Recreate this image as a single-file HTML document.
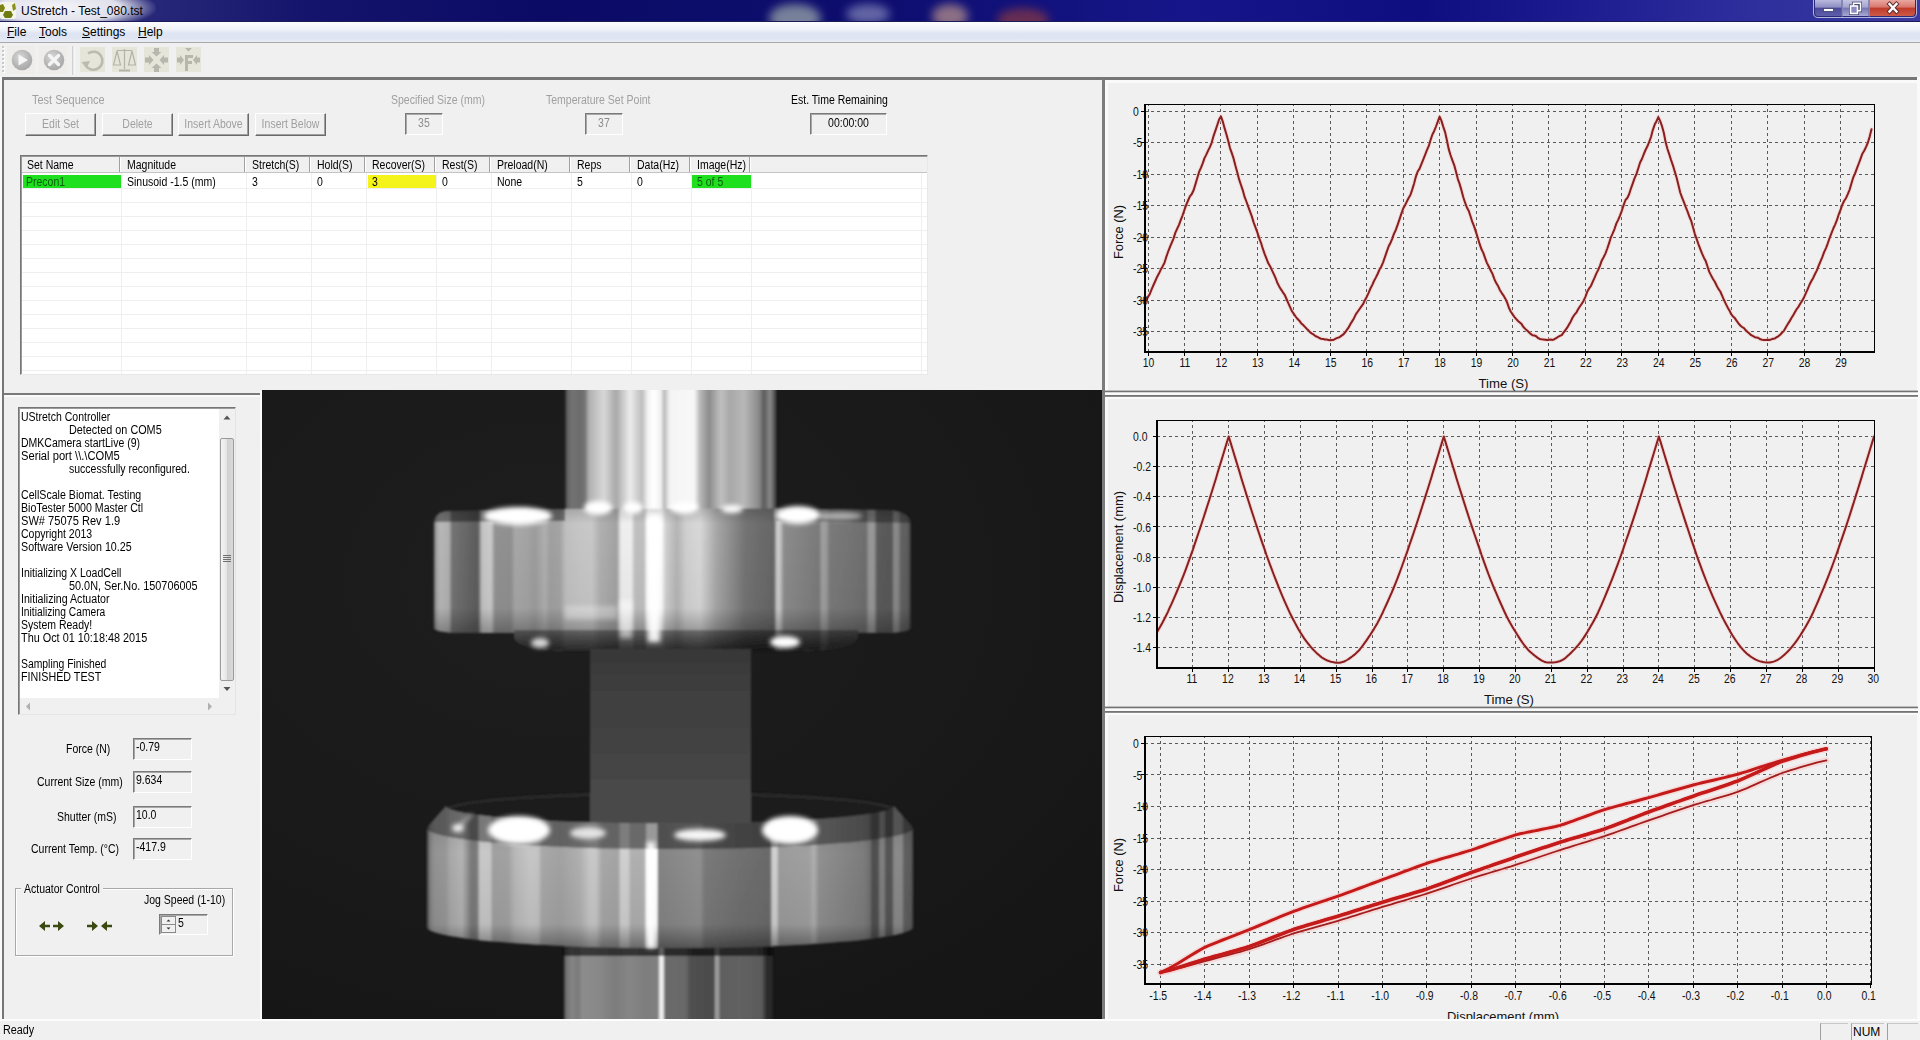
<!DOCTYPE html>
<html lang="en">
<head>
<meta charset="utf-8">
<title>UStretch - Test_080.tst</title>
<style>
html,body{margin:0;padding:0;}
body{width:1920px;height:1040px;overflow:hidden;position:relative;background:#f0f0f0;
 font-family:"Liberation Sans",sans-serif;font-size:12px;color:#000;}
.a{position:absolute;}
.t{position:absolute;white-space:nowrap;font-size:12px;line-height:14px;transform-origin:0 0;transform:scaleX(.875);}
.dis{color:#a0a0a0;}
#titlebar{left:0;top:0;width:1920px;height:21px;overflow:hidden;
 background:linear-gradient(90deg,#3b3b86 0,#14146c 16%,#0b0b66 28%,#0d0d6e 45%,#16168a 62%,#0e0e80 74%,#1c1c90 82%,#2c2c9c 90%,#3a3aa0 100%);}
#menubar{left:0;top:22px;width:1920px;height:20px;
 background:linear-gradient(180deg,#fbfcfe 0,#f1f4fa 35%,#dfe5f3 55%,#dde3f1 75%,#e8ecf6 100%);}
#menubar span{position:absolute;top:3px;font-size:12px;line-height:14px;white-space:nowrap;}
#menubar u{text-decoration:underline;}
#toolbar{left:0;top:43px;width:1920px;height:34px;background:#f0f0f0;}
.btn{position:absolute;box-sizing:border-box;height:23px;top:113px;background:#f0f0f0;
 border:1px solid;border-color:#fff #6a6a6a #6a6a6a #fff;box-shadow:inset -1px -1px 0 #a0a0a0;}
.btn .t{top:3px;}
.sunk{position:absolute;box-sizing:border-box;background:#f0f0f0;border:1px solid;border-color:#7a7a7a #fff #fff #7a7a7a;box-shadow:inset 1px 1px 0 #a8a8a8;}
.hline{position:absolute;background:#767676;}
</style>
</head>
<body>

<!-- ===== title bar ===== -->
<div id="titlebar" class="a">
 <div class="a" style="left:-40px;top:-14px;width:196px;height:44px;border-radius:22px;background:radial-gradient(ellipse at center,rgba(255,255,255,.95) 0,rgba(255,255,255,.85) 45%,rgba(255,255,255,0) 72%);"></div>
 <div class="a" style="left:769px;top:4px;width:52px;height:28px;border-radius:50%;background:#cfe0c0;opacity:0.55;filter:blur(5px);"></div>
<div class="a" style="left:846px;top:4px;width:44px;height:20px;border-radius:50%;background:#b8bcdc;opacity:0.5;filter:blur(5px);"></div>
<div class="a" style="left:932px;top:4px;width:36px;height:24px;border-radius:50%;background:#e0b090;opacity:0.6;filter:blur(5px);"></div>
<div class="a" style="left:997px;top:8px;width:52px;height:24px;border-radius:50%;background:#a04038;opacity:0.6;filter:blur(5px);"></div>

 <svg class="a" style="left:0;top:2px" width="17" height="18" viewBox="0 0 17 18">
  <rect x="0" y="0" width="16" height="17" rx="2" fill="#f4f4ea"/>
  <path d="M0 3 L3 2 L5 6 L3 10 L0 10 Z" fill="#7d8414"/>
  <path d="M5 9 L11 9 L13 13 L11 16 L5 16 L3 13 Z" fill="#6f7a10"/>
  <path d="M12 3 L15 1 L16 7 L13 9 Z" fill="#8a8f1e"/>
 </svg>
 <div class="a" style="left:21px;top:4px;font-size:12px;line-height:15px;white-space:nowrap;color:#000;">UStretch - Test_080.tst</div>
 <svg class="a" style="left:1806px;top:0" width="114" height="22" viewBox="1806 0 114 22">
<defs>
<linearGradient id="wb1" x1="0" y1="0" x2="0" y2="1"><stop offset="0" stop-color="#b9b9de"/><stop offset=".45" stop-color="#8e8ec4"/><stop offset=".5" stop-color="#4a4a98"/><stop offset="1" stop-color="#5e5eaa"/></linearGradient>
<linearGradient id="wb2" x1="0" y1="0" x2="0" y2="1"><stop offset="0" stop-color="#c4c4e2"/><stop offset=".45" stop-color="#a4a4d0"/><stop offset=".5" stop-color="#7676b4"/><stop offset="1" stop-color="#a8a8d2"/></linearGradient>
<linearGradient id="wb3" x1="0" y1="0" x2="0" y2="1"><stop offset="0" stop-color="#e9a8a0"/><stop offset=".45" stop-color="#d8766c"/><stop offset=".5" stop-color="#bf3a2a"/><stop offset="1" stop-color="#cf5a48"/></linearGradient>
</defs>
<path d="M1813.500 0 V13 Q1813.500 17.500 1818 17.500 H1912 Q1916.500 17.500 1916.500 13 V0 Z" fill="#2a2a7a"/>
<path d="M1815 0 V12.500 Q1815 16 1818.500 16 H1841.500 V0 Z" fill="url(#wb1)"/>
<path d="M1843 0 H1868.500 V16 H1843 Z" fill="url(#wb2)"/>
<path d="M1870 0 V16 H1911.500 Q1915 16 1915 12.500 V0 Z" fill="url(#wb3)"/>
<path d="M1813.500 0 V13 Q1813.500 17.500 1818 17.500 H1912 Q1916.500 17.500 1916.500 13 V0" fill="none" stroke="#d8d8f0" stroke-width="1" opacity=".8"/>
<path d="M1842.200 0 V16.500 M1869.200 0 V16.500" stroke="#e4e4f4" stroke-width="1" opacity=".7"/>
<rect x="1823.500" y="8.500" width="10" height="3" fill="#fff" stroke="#3c3c6c" stroke-width=".8"/>
<g fill="none" stroke="#fff" stroke-width="1.600"><rect x="1853.500" y="3.200" width="7" height="7.500" stroke="#3c3c6c" stroke-width="3"/><rect x="1850.500" y="6" width="7" height="7.500" stroke="#3c3c6c" stroke-width="3"/><rect x="1853.500" y="3.200" width="7" height="7.500"/><rect x="1850.500" y="6" width="7" height="7.500" fill="#8c8cc0"/></g>
<path d="M1889.500 4 L1896.500 11.500 M1896.500 4 L1889.500 11.500" stroke="#5a2a2a" stroke-width="4.200" stroke-linecap="square"/>
<path d="M1889.500 4 L1896.500 11.500 M1896.500 4 L1889.500 11.500" stroke="#fff" stroke-width="2.400" stroke-linecap="square"/>
</svg>

</div>
<div class="a" style="left:0;top:21px;width:1920px;height:1px;background:#1b1b58;"></div>

<!-- ===== menu bar ===== -->
<div id="menubar" class="a">
 <span style="left:7px"><u>F</u>ile</span>
 <span style="left:39px"><u>T</u>ools</span>
 <span style="left:82px"><u>S</u>ettings</span>
 <span style="left:138px"><u>H</u>elp</span>
</div>
<div class="a" style="left:0;top:42px;width:1920px;height:1px;background:#a9a9a9;"></div>

<!-- ===== toolbar ===== -->
<div id="toolbar" class="a">
<div class="a" style="left:2px;top:3px;width:2px;height:2px;background:#c8c8c8;box-shadow:1px 1px 0 #fff;"></div>
<div class="a" style="left:2px;top:7px;width:2px;height:2px;background:#c8c8c8;box-shadow:1px 1px 0 #fff;"></div>
<div class="a" style="left:2px;top:11px;width:2px;height:2px;background:#c8c8c8;box-shadow:1px 1px 0 #fff;"></div>
<div class="a" style="left:2px;top:15px;width:2px;height:2px;background:#c8c8c8;box-shadow:1px 1px 0 #fff;"></div>
<div class="a" style="left:2px;top:19px;width:2px;height:2px;background:#c8c8c8;box-shadow:1px 1px 0 #fff;"></div>
<div class="a" style="left:2px;top:23px;width:2px;height:2px;background:#c8c8c8;box-shadow:1px 1px 0 #fff;"></div>
<div class="a" style="left:2px;top:27px;width:2px;height:2px;background:#c8c8c8;box-shadow:1px 1px 0 #fff;"></div>
<svg class="a" style="left:0;top:0" width="220" height="34" viewBox="0 43 220 34">
<defs>
<radialGradient id="tbg" cx=".4" cy=".35" r=".75"><stop offset="0" stop-color="#d8d8d8"/><stop offset=".6" stop-color="#b4b4b4"/><stop offset="1" stop-color="#a4a4a4"/></radialGradient>
<filter id="tbb" x="-10%" y="-10%" width="120%" height="120%"><feGaussianBlur stdDeviation=".5"/></filter>
</defs>
<g filter="url(#tbb)">
<rect x="7" y="46" width="28" height="28" fill="#eeedea"/>
<rect x="39" y="46" width="28" height="28" fill="#eeedea"/>
<circle cx="22" cy="60" r="10.3" fill="url(#tbg)"/>
<path d="M18.5 54.5 L18.5 65.5 L28 60 Z" fill="#f6f6f6"/>
<circle cx="54" cy="60" r="10.3" fill="url(#tbg)"/>
<path d="M49.5 55.5 L58.5 64.5 M58.5 55.5 L49.5 64.5" stroke="#f4f4f4" stroke-width="3.4" stroke-linecap="round"/>
<rect x="80" y="47" width="25" height="25" fill="#e6e5da"/>
<rect x="112" y="47" width="25" height="25" fill="#e6e5da"/>
<rect x="144" y="47" width="25" height="25" fill="#e6e5da"/>
<rect x="176" y="47" width="25" height="25" fill="#e6e5da"/>
<path d="M85.5 65 A9 9 0 1 0 88 53.5" fill="none" stroke="#bcbbb2" stroke-width="2.6"/>
<path d="M81.5 62 L90 61 L86.5 68.5 Z" fill="#bcbbb2"/>
<g stroke="#b4b3aa" stroke-width="1.2" fill="none">
<path d="M117 50.5 H132 M124.5 49 V69"/>
<path d="M117 51 L113.5 65 H120.5 Z M132 51 L128.500 65 H135.5 Z"/>
<path d="M119 70.500 H130" stroke-width="2"/>
</g>
<g fill="#b8b7ae">
<path d="M154 48 h5 v4 h2.500 l-5 4.5 l-5 -4.5 h2.500 Z"/>
<path d="M154 72 h5 v-4 h2.500 l-5 -4.5 l-5 4.5 h2.500 Z"/>
<path d="M145 57.500 v5 h4 v2.500 l4.5 -5 l-4.5 -5 v2.500 Z"/>
<path d="M168 57.500 v5 h-4 v2.500 l-4.5 -5 l4.5 -5 v2.500 Z"/>
<path d="M185 48 h7 l-3.500 3.500 Z"/>
<path d="M185 55 h8 v3 h-5 v3 h4 v3 h-4 v7 h-3 Z"/>
<path d="M177 57.500 v5 h3 v2.500 l4 -5 l-4 -5 v2.500 Z"/>
<path d="M200 57.500 v5 h-3 v2.500 l-4 -5 l4 -5 v2.500 Z"/>
</g>
</g>
<rect x="72.500" y="46" width="1" height="29" fill="#b4b4b4"/><rect x="73.500" y="46" width="1" height="29" fill="#fdfdfd"/>
</svg>

</div>

<!-- ===== main frame lines ===== -->
<div class="hline" style="left:2px;top:77px;width:1915px;height:3px;"></div>
<div class="hline" style="left:2px;top:77px;width:2px;height:942px;"></div>
<div class="a" style="left:0;top:77px;width:2px;height:942px;background:#fafafa;"></div>
<div class="hline" style="left:1102px;top:79px;width:3px;height:940px;background:#7c7c7c;"></div>
<div class="a" style="left:1105px;top:80px;width:3px;height:939px;background:#fafafa;"></div>
<div class="a" style="left:1105px;top:80px;width:812px;height:3px;background:#fafafa;"></div>
<div class="a" style="left:1917px;top:77px;width:3px;height:942px;background:#fafafa;"></div>

<!-- ===== top-left: test sequence ===== -->
<div class="t dis" style="left:31.5px;top:93px;transform:scaleX(.915);">Test Sequence</div>
<div class="btn" style="left:25px;width:71px;"><div class="t dis" style="left:0;width:78.9px;text-align:center;">Edit Set</div></div>
<div class="btn" style="left:102px;width:71px;"><div class="t dis" style="left:0;width:78.9px;text-align:center;">Delete</div></div>
<div class="btn" style="left:178px;width:71px;"><div class="t dis" style="left:0;width:78.9px;text-align:center;">Insert Above</div></div>
<div class="btn" style="left:255px;width:71px;"><div class="t dis" style="left:0;width:78.9px;text-align:center;">Insert Below</div></div>
<div class="t dis" style="left:391px;top:93px;">Specified Size (mm)</div>
<div class="sunk" style="left:405px;top:113px;width:38px;height:22px;"><div class="t" style="left:0;top:2px;width:41px;text-align:center;color:#8c8c8c;">35</div></div>
<div class="t dis" style="left:546px;top:93px;">Temperature Set Point</div>
<div class="sunk" style="left:585px;top:113px;width:38px;height:22px;"><div class="t" style="left:0;top:2px;width:41px;text-align:center;color:#8c8c8c;">37</div></div>
<div class="t" style="left:791px;top:93px;">Est. Time Remaining</div>
<div class="sunk" style="left:810px;top:113px;width:77px;height:22px;"><div class="t" style="left:0;top:2px;width:85.7px;text-align:center;">00:00:00</div></div>
<div class="a" style="left:20px;top:155px;width:908px;height:220px;background:#fff;box-sizing:border-box;border:1px solid;border-color:#767676 #e8e8e8 #e8e8e8 #767676;box-shadow:inset 1px 1px 0 #9a9a9a;"></div>
<div class="a" style="left:22px;top:157px;width:905px;height:15px;background:#f0f0f0;border-bottom:1px solid #c4c4c4;"></div>
<div class="a" style="left:119px;top:157px;width:1px;height:15px;background:#a0a0a0;"></div><div class="a" style="left:120px;top:157px;width:1px;height:15px;background:#fff;"></div>
<div class="t" style="left:27px;top:158px;">Set Name</div>
<div class="a" style="left:244px;top:157px;width:1px;height:15px;background:#a0a0a0;"></div><div class="a" style="left:245px;top:157px;width:1px;height:15px;background:#fff;"></div>
<div class="t" style="left:127px;top:158px;">Magnitude</div>
<div class="a" style="left:309px;top:157px;width:1px;height:15px;background:#a0a0a0;"></div><div class="a" style="left:310px;top:157px;width:1px;height:15px;background:#fff;"></div>
<div class="t" style="left:252px;top:158px;">Stretch(S)</div>
<div class="a" style="left:364px;top:157px;width:1px;height:15px;background:#a0a0a0;"></div><div class="a" style="left:365px;top:157px;width:1px;height:15px;background:#fff;"></div>
<div class="t" style="left:317px;top:158px;">Hold(S)</div>
<div class="a" style="left:434px;top:157px;width:1px;height:15px;background:#a0a0a0;"></div><div class="a" style="left:435px;top:157px;width:1px;height:15px;background:#fff;"></div>
<div class="t" style="left:372px;top:158px;">Recover(S)</div>
<div class="a" style="left:489px;top:157px;width:1px;height:15px;background:#a0a0a0;"></div><div class="a" style="left:490px;top:157px;width:1px;height:15px;background:#fff;"></div>
<div class="t" style="left:442px;top:158px;">Rest(S)</div>
<div class="a" style="left:569px;top:157px;width:1px;height:15px;background:#a0a0a0;"></div><div class="a" style="left:570px;top:157px;width:1px;height:15px;background:#fff;"></div>
<div class="t" style="left:497px;top:158px;">Preload(N)</div>
<div class="a" style="left:629px;top:157px;width:1px;height:15px;background:#a0a0a0;"></div><div class="a" style="left:630px;top:157px;width:1px;height:15px;background:#fff;"></div>
<div class="t" style="left:577px;top:158px;">Reps</div>
<div class="a" style="left:689px;top:157px;width:1px;height:15px;background:#a0a0a0;"></div><div class="a" style="left:690px;top:157px;width:1px;height:15px;background:#fff;"></div>
<div class="t" style="left:637px;top:158px;">Data(Hz)</div>
<div class="a" style="left:749px;top:157px;width:1px;height:15px;background:#a0a0a0;"></div><div class="a" style="left:750px;top:157px;width:1px;height:15px;background:#fff;"></div>
<div class="t" style="left:697px;top:158px;">Image(Hz)</div>
<div class="a" style="left:22px;top:188px;width:905px;height:1px;background:#efefef;"></div>
<div class="a" style="left:22px;top:202px;width:905px;height:1px;background:#efefef;"></div>
<div class="a" style="left:22px;top:216px;width:905px;height:1px;background:#efefef;"></div>
<div class="a" style="left:22px;top:230px;width:905px;height:1px;background:#efefef;"></div>
<div class="a" style="left:22px;top:244px;width:905px;height:1px;background:#efefef;"></div>
<div class="a" style="left:22px;top:258px;width:905px;height:1px;background:#efefef;"></div>
<div class="a" style="left:22px;top:272px;width:905px;height:1px;background:#efefef;"></div>
<div class="a" style="left:22px;top:286px;width:905px;height:1px;background:#efefef;"></div>
<div class="a" style="left:22px;top:300px;width:905px;height:1px;background:#efefef;"></div>
<div class="a" style="left:22px;top:314px;width:905px;height:1px;background:#efefef;"></div>
<div class="a" style="left:22px;top:328px;width:905px;height:1px;background:#efefef;"></div>
<div class="a" style="left:22px;top:342px;width:905px;height:1px;background:#efefef;"></div>
<div class="a" style="left:22px;top:356px;width:905px;height:1px;background:#efefef;"></div>
<div class="a" style="left:22px;top:370px;width:905px;height:1px;background:#efefef;"></div>
<div class="a" style="left:121px;top:173px;width:1px;height:201px;background:#efefef;"></div>
<div class="a" style="left:246px;top:173px;width:1px;height:201px;background:#efefef;"></div>
<div class="a" style="left:311px;top:173px;width:1px;height:201px;background:#efefef;"></div>
<div class="a" style="left:366px;top:173px;width:1px;height:201px;background:#efefef;"></div>
<div class="a" style="left:436px;top:173px;width:1px;height:201px;background:#efefef;"></div>
<div class="a" style="left:491px;top:173px;width:1px;height:201px;background:#efefef;"></div>
<div class="a" style="left:571px;top:173px;width:1px;height:201px;background:#efefef;"></div>
<div class="a" style="left:631px;top:173px;width:1px;height:201px;background:#efefef;"></div>
<div class="a" style="left:691px;top:173px;width:1px;height:201px;background:#efefef;"></div>
<div class="a" style="left:751px;top:173px;width:1px;height:201px;background:#efefef;"></div>
<div class="a" style="left:23px;top:175px;width:98px;height:13px;background:#1fe01f;"></div>
<div class="a" style="left:368px;top:175px;width:68px;height:13px;background:#f4f41a;"></div>
<div class="a" style="left:692px;top:175px;width:59px;height:13px;background:#1fe01f;"></div>
<div class="t" style="left:26px;top:175px;color:#0b5e0b;">Precon1</div>
<div class="t" style="left:127px;top:175px;">Sinusoid -1.5 (mm)</div>
<div class="t" style="left:252px;top:175px;">3</div>
<div class="t" style="left:317px;top:175px;">0</div>
<div class="t" style="left:372px;top:175px;">3</div>
<div class="t" style="left:442px;top:175px;">0</div>
<div class="t" style="left:497px;top:175px;">None</div>
<div class="t" style="left:577px;top:175px;">5</div>
<div class="t" style="left:637px;top:175px;">0</div>
<div class="t" style="left:697px;top:175px;color:#0b5e0b;">5 of 5</div>
<div class="a" style="left:921px;top:173px;width:1px;height:201px;background:#efefef;"></div>


<!-- ===== bottom-left: log + readouts ===== -->
<div class="hline" style="left:4px;top:393px;width:256px;height:2px;background:#7a7a7a;"></div>
<div class="a" style="left:4px;top:395px;width:256px;height:2px;background:#fafafa;"></div>
<div class="a" style="left:18px;top:407px;width:218px;height:308px;background:#fff;box-sizing:border-box;border:1px solid;border-color:#767676 #e4e4e4 #e4e4e4 #767676;box-shadow:inset 1px 1px 0 #9a9a9a;"></div>
<div class="t" style="left:21px;top:410px;">UStretch Controller</div>
<div class="t" style="left:69px;top:423px;transform:scaleX(0.902);">Detected on COM5</div>
<div class="t" style="left:21px;top:436px;">DMKCamera startLive (9)</div>
<div class="t" style="left:21px;top:449px;transform:scaleX(0.931);">Serial port \\.\COM5</div>
<div class="t" style="left:69px;top:462px;">successfully reconfigured.</div>
<div class="t" style="left:21px;top:488px;transform:scaleX(0.885);">CellScale Biomat. Testing</div>
<div class="t" style="left:21px;top:501px;transform:scaleX(0.885);">BioTester 5000 Master Ctl</div>
<div class="t" style="left:21px;top:514px;transform:scaleX(0.923);">SW# 75075 Rev 1.9</div>
<div class="t" style="left:21px;top:527px;">Copyright 2013</div>
<div class="t" style="left:21px;top:540px;transform:scaleX(0.892);">Software Version 10.25</div>
<div class="t" style="left:21px;top:566px;">Initializing X LoadCell</div>
<div class="t" style="left:69px;top:579px;transform:scaleX(0.905);">50.0N, Ser.No. 150706005</div>
<div class="t" style="left:21px;top:592px;transform:scaleX(0.885);">Initializing Actuator</div>
<div class="t" style="left:21px;top:605px;transform:scaleX(0.854);">Initializing Camera</div>
<div class="t" style="left:21px;top:618px;">System Ready!</div>
<div class="t" style="left:21px;top:631px;transform:scaleX(0.905);">Thu Oct 01 10:18:48 2015</div>
<div class="t" style="left:21px;top:657px;transform:scaleX(0.865);">Sampling Finished</div>
<div class="t" style="left:21px;top:670px;transform:scaleX(0.894);">FINISHED TEST</div>
<div class="a" style="left:219px;top:409px;width:16px;height:289px;background:#f0f0f0;"></div>
<div class="a" style="left:220px;top:438px;width:14px;height:243px;box-sizing:border-box;border:1px solid #9a9a9a;border-radius:2px;background:linear-gradient(90deg,#f4f4f4 0,#e6e6e6 45%,#cfcfcf 55%,#dadada 100%);"></div>
<svg class="a" style="left:219px;top:409px" width="16" height="289" viewBox="0 0 16 289"><path d="M4.5 10.5 L8 6.5 L11.5 10.5 Z" fill="#555"/><path d="M4.5 278 L8 282 L11.5 278 Z" fill="#555"/><path d="M4 146.5h8M4 148.5h8M4 150.5h8M4 152.5h8" stroke="#707070" stroke-width="1"/></svg>
<div class="a" style="left:20px;top:698px;width:199px;height:16px;background:#f0f0f0;"></div>
<div class="a" style="left:219px;top:698px;width:16px;height:16px;background:#f0f0f0;"></div>
<svg class="a" style="left:20px;top:698px" width="199" height="16" viewBox="0 0 199 16"><path d="M10 4.5 L6 8.5 L10 12.5 Z" fill="#b0b0b0"/><path d="M188 4.5 L192 8.5 L188 12.5 Z" fill="#b0b0b0"/></svg>
<div class="t" style="left:66px;top:742px;">Force (N)</div>
<div class="sunk" style="left:133px;top:738px;width:59px;height:22px;"><div class="t" style="left:2px;top:1px;">-0.79</div></div>
<div class="t" style="left:37px;top:775px;">Current Size (mm)</div>
<div class="sunk" style="left:133px;top:771px;width:59px;height:22px;"><div class="t" style="left:2px;top:1px;">9.634</div></div>
<div class="t" style="left:57px;top:810px;">Shutter (mS)</div>
<div class="sunk" style="left:133px;top:806px;width:59px;height:22px;"><div class="t" style="left:2px;top:1px;">10.0</div></div>
<div class="t" style="left:31px;top:842px;">Current Temp. (°C)</div>
<div class="sunk" style="left:133px;top:838px;width:59px;height:22px;"><div class="t" style="left:2px;top:1px;">-417.9</div></div>
<div class="a" style="left:15px;top:888px;width:218px;height:68px;box-sizing:border-box;border:1px solid #a8a8a8;box-shadow:1px 1px 0 #fff, inset 1px 1px 0 #fff;"></div>
<div class="a" style="left:21px;top:882px;width:82px;height:14px;background:#f0f0f0;"></div>
<div class="t" style="left:24px;top:882px;">Actuator Control</div>
<div class="t" style="left:144px;top:893px;">Jog Speed (1-10)</div>
<div class="sunk" style="left:159px;top:914px;width:49px;height:21px;"></div>
<div class="a" style="left:161px;top:916px;width:15px;height:17px;box-sizing:border-box;border:1px solid #8a8a8a;background:#f0f0f0;"></div>
<div class="a" style="left:161px;top:924px;width:15px;height:1px;background:#8a8a8a;"></div>
<svg class="a" style="left:161px;top:916px" width="15" height="17" viewBox="0 0 15 17"><path d="M5.5 5.5 L7.5 3.5 L9.5 5.5 Z" fill="#333"/><path d="M5.5 11.5 L7.5 13.5 L9.5 11.5 Z" fill="#333"/></svg>
<div class="t" style="left:178px;top:916px;">5</div>
<svg class="a" style="left:36px;top:918px" width="80" height="16" viewBox="0 0 80 16">
<g fill="#3a4a10">
<path d="M3 8 L9 3 L9 6.7 L14 6.7 L14 9.3 L9 9.3 L9 13 Z"/>
<path d="M28 8 L22 3 L22 6.7 L17 6.7 L17 9.3 L22 9.3 L22 13 Z"/>
<path d="M62 8 L56 3 L56 6.7 L51 6.7 L51 9.3 L56 9.3 L56 13 Z"/>
<path d="M65 8 L71 3 L71 6.7 L76 6.7 L76 9.3 L71 9.3 L71 13 Z"/>
</g></svg>


<!-- ===== camera ===== -->
<svg class="a" style="left:262px;top:390px" width="840" height="629" viewBox="262 390 840 629">
<defs>
<linearGradient id="gST" gradientUnits="userSpaceOnUse" x1="565" y1="0" x2="776.5" y2="0"><stop offset="0.0000" stop-color="#343434"/><stop offset="0.0142" stop-color="#666666"/><stop offset="0.0331" stop-color="#727272"/><stop offset="0.0709" stop-color="#6c6c6c"/><stop offset="0.0946" stop-color="#747474"/><stop offset="0.1135" stop-color="#b0b0b0"/><stop offset="0.1844" stop-color="#d8d8d8"/><stop offset="0.2411" stop-color="#a8a8a8"/><stop offset="0.3073" stop-color="#ececec"/><stop offset="0.3641" stop-color="#bdbdbd"/><stop offset="0.3924" stop-color="#f4f4f4"/><stop offset="0.4208" stop-color="#ffffff"/><stop offset="0.4539" stop-color="#f0f0f0"/><stop offset="0.4681" stop-color="#b8b8b8"/><stop offset="0.4965" stop-color="#f4f4f4"/><stop offset="0.6099" stop-color="#f8f8f8"/><stop offset="0.6383" stop-color="#b8b8b8"/><stop offset="0.6809" stop-color="#8c8c8c"/><stop offset="0.7376" stop-color="#c0c0c0"/><stop offset="0.7801" stop-color="#a8a8a8"/><stop offset="0.8463" stop-color="#b8b8b8"/><stop offset="0.9173" stop-color="#8a8a8a"/><stop offset="0.9409" stop-color="#5a5a5a"/><stop offset="0.9693" stop-color="#8a8a8a"/><stop offset="1.0000" stop-color="#383838"/></linearGradient>
<linearGradient id="gDT" gradientUnits="userSpaceOnUse" x1="433" y1="0" x2="911" y2="0"><stop offset="0.0000" stop-color="#383838"/><stop offset="0.0063" stop-color="#a0a0a0"/><stop offset="0.0146" stop-color="#b8b8b8"/><stop offset="0.0335" stop-color="#b0b0b0"/><stop offset="0.0397" stop-color="#747474"/><stop offset="0.0669" stop-color="#686868"/><stop offset="0.0941" stop-color="#5c5c5c"/><stop offset="0.1025" stop-color="#c4c4c4"/><stop offset="0.1213" stop-color="#cccccc"/><stop offset="0.1297" stop-color="#929292"/><stop offset="0.1632" stop-color="#909090"/><stop offset="0.1715" stop-color="#a8a8a8"/><stop offset="0.1967" stop-color="#a4a4a4"/><stop offset="0.2134" stop-color="#9c9c9c"/><stop offset="0.2343" stop-color="#b0b0b0"/><stop offset="0.2448" stop-color="#a0a0a0"/><stop offset="0.2657" stop-color="#a4a4a4"/><stop offset="0.2782" stop-color="#c0c0c0"/><stop offset="0.3075" stop-color="#c6c6c6"/><stop offset="0.3326" stop-color="#c8c8c8"/><stop offset="0.3494" stop-color="#b0b0b0"/><stop offset="0.3849" stop-color="#a2a2a2"/><stop offset="0.3933" stop-color="#eeeeee"/><stop offset="0.4142" stop-color="#f0f0f0"/><stop offset="0.4226" stop-color="#c0c0c0"/><stop offset="0.4414" stop-color="#c0c0c0"/><stop offset="0.4498" stop-color="#ffffff"/><stop offset="0.4770" stop-color="#ffffff"/><stop offset="0.4874" stop-color="#d0d0d0"/><stop offset="0.5105" stop-color="#b4b4b4"/><stop offset="0.5293" stop-color="#d0d0d0"/><stop offset="0.5586" stop-color="#d8d8d8"/><stop offset="0.5753" stop-color="#c0c0c0"/><stop offset="0.5921" stop-color="#a8a8a8"/><stop offset="0.6276" stop-color="#8a8a8a"/><stop offset="0.6527" stop-color="#747474"/><stop offset="0.6841" stop-color="#6c6c6c"/><stop offset="0.7134" stop-color="#666666"/><stop offset="0.7197" stop-color="#d0d0d0"/><stop offset="0.7259" stop-color="#c8c8c8"/><stop offset="0.7343" stop-color="#8c8c8c"/><stop offset="0.7678" stop-color="#848484"/><stop offset="0.8075" stop-color="#7a7a7a"/><stop offset="0.8138" stop-color="#a0a0a0"/><stop offset="0.8222" stop-color="#9c9c9c"/><stop offset="0.8305" stop-color="#7a7a7a"/><stop offset="0.8724" stop-color="#747474"/><stop offset="0.9059" stop-color="#6e6e6e"/><stop offset="0.9121" stop-color="#989898"/><stop offset="0.9226" stop-color="#989898"/><stop offset="0.9289" stop-color="#5c5c5c"/><stop offset="0.9603" stop-color="#585858"/><stop offset="0.9644" stop-color="#8a8a8a"/><stop offset="0.9728" stop-color="#888888"/><stop offset="0.9791" stop-color="#626262"/><stop offset="0.9937" stop-color="#5c5c5c"/><stop offset="1.0000" stop-color="#343434"/></linearGradient>
<linearGradient id="gDB" gradientUnits="userSpaceOnUse" x1="426.5" y1="0" x2="913.5" y2="0"><stop offset="0.0000" stop-color="#383838"/><stop offset="0.0072" stop-color="#808080"/><stop offset="0.0154" stop-color="#929292"/><stop offset="0.0400" stop-color="#989898"/><stop offset="0.0483" stop-color="#a8a8a8"/><stop offset="0.0729" stop-color="#b4b4b4"/><stop offset="0.0852" stop-color="#909090"/><stop offset="0.0914" stop-color="#7a7a7a"/><stop offset="0.1037" stop-color="#7a7a7a"/><stop offset="0.1099" stop-color="#c8c8c8"/><stop offset="0.1304" stop-color="#c8c8c8"/><stop offset="0.1366" stop-color="#a0a0a0"/><stop offset="0.1674" stop-color="#a2a2a2"/><stop offset="0.1817" stop-color="#b8b8b8"/><stop offset="0.2125" stop-color="#c6c6c6"/><stop offset="0.2290" stop-color="#c4c4c4"/><stop offset="0.2372" stop-color="#a8a8a8"/><stop offset="0.2741" stop-color="#a2a2a2"/><stop offset="0.3152" stop-color="#b0b0b0"/><stop offset="0.3357" stop-color="#c8c8c8"/><stop offset="0.3480" stop-color="#c8c8c8"/><stop offset="0.3604" stop-color="#a8a8a8"/><stop offset="0.3932" stop-color="#a4a4a4"/><stop offset="0.3994" stop-color="#d0d0d0"/><stop offset="0.4138" stop-color="#d0d0d0"/><stop offset="0.4199" stop-color="#b0b0b0"/><stop offset="0.4487" stop-color="#b0b0b0"/><stop offset="0.4528" stop-color="#ffffff"/><stop offset="0.4723" stop-color="#ffffff"/><stop offset="0.4764" stop-color="#848484"/><stop offset="0.5205" stop-color="#8a8a8a"/><stop offset="0.5616" stop-color="#909090"/><stop offset="0.5719" stop-color="#7a7a7a"/><stop offset="0.6437" stop-color="#707070"/><stop offset="0.7053" stop-color="#6a6a6a"/><stop offset="0.7105" stop-color="#d0d0d0"/><stop offset="0.7187" stop-color="#d0d0d0"/><stop offset="0.7238" stop-color="#9c9c9c"/><stop offset="0.7854" stop-color="#a0a0a0"/><stop offset="0.7957" stop-color="#b0b0b0"/><stop offset="0.8060" stop-color="#909090"/><stop offset="0.8984" stop-color="#7c7c7c"/><stop offset="0.9107" stop-color="#707070"/><stop offset="0.9148" stop-color="#505050"/><stop offset="0.9271" stop-color="#505050"/><stop offset="0.9312" stop-color="#808080"/><stop offset="0.9394" stop-color="#808080"/><stop offset="0.9435" stop-color="#555555"/><stop offset="0.9559" stop-color="#555555"/><stop offset="0.9600" stop-color="#8a8a8a"/><stop offset="0.9764" stop-color="#8a8a8a"/><stop offset="0.9805" stop-color="#606060"/><stop offset="0.9949" stop-color="#5c5c5c"/><stop offset="1.0000" stop-color="#343434"/></linearGradient>
<linearGradient id="gSB" gradientUnits="userSpaceOnUse" x1="563.5" y1="0" x2="773" y2="0"><stop offset="0.0000" stop-color="#2a2a2a"/><stop offset="0.0119" stop-color="#707070"/><stop offset="0.0406" stop-color="#868686"/><stop offset="0.0692" stop-color="#787878"/><stop offset="0.0883" stop-color="#8c8c8c"/><stop offset="0.1742" stop-color="#888888"/><stop offset="0.2458" stop-color="#7c7c7c"/><stop offset="0.3174" stop-color="#868686"/><stop offset="0.3890" stop-color="#7e7e7e"/><stop offset="0.4511" stop-color="#808080"/><stop offset="0.4606" stop-color="#f0f0f0"/><stop offset="0.4749" stop-color="#f0f0f0"/><stop offset="0.4845" stop-color="#6c6c6c"/><stop offset="0.5847" stop-color="#686868"/><stop offset="0.6038" stop-color="#505050"/><stop offset="0.7184" stop-color="#4a4a4a"/><stop offset="0.7255" stop-color="#9a9a9a"/><stop offset="0.7399" stop-color="#9a9a9a"/><stop offset="0.7470" stop-color="#5e5e5e"/><stop offset="0.8425" stop-color="#626262"/><stop offset="0.9475" stop-color="#5a5a5a"/><stop offset="0.9666" stop-color="#2e2e2e"/><stop offset="1.0000" stop-color="#262626"/></linearGradient>
<linearGradient id="gV1" x1="0" y1="0" x2="0" y2="1"><stop offset="0" stop-color="#000" stop-opacity=".15"/><stop offset=".12" stop-color="#000" stop-opacity="0"/><stop offset=".8" stop-color="#000" stop-opacity=".04"/><stop offset="1" stop-color="#000" stop-opacity=".3"/></linearGradient>
<linearGradient id="gV2" x1="0" y1="0" x2="0" y2="1"><stop offset="0" stop-color="#000" stop-opacity=".06"/><stop offset=".2" stop-color="#000" stop-opacity="0"/><stop offset=".8" stop-color="#000" stop-opacity=".06"/><stop offset="1" stop-color="#000" stop-opacity=".4"/></linearGradient>
<linearGradient id="gStep" x1="0" y1="0" x2="0" y2="1"><stop offset="0" stop-color="#000" stop-opacity=".5"/><stop offset=".35" stop-color="#000" stop-opacity=".62"/><stop offset="1" stop-color="#000" stop-opacity=".8"/></linearGradient>
<linearGradient id="gSp" x1="0" y1="0" x2="0" y2="1"><stop offset="0" stop-color="#373737"/><stop offset=".25" stop-color="#3f3f3f"/><stop offset="1" stop-color="#494949"/></linearGradient>
<radialGradient id="gBG" cx=".35" cy=".3" r=".9"><stop offset="0" stop-color="#1e1e1e"/><stop offset=".6" stop-color="#191919"/><stop offset="1" stop-color="#151515"/></radialGradient>
<filter id="b1" x="-5%" y="-5%" width="110%" height="110%"><feGaussianBlur stdDeviation="1.1"/></filter>
<filter id="b3" x="-20%" y="-40%" width="140%" height="180%"><feGaussianBlur stdDeviation="2.4"/></filter>
<clipPath id="cc"><rect x="262" y="390" width="840" height="629"/></clipPath>
</defs>
<rect x="262" y="390" width="840" height="629" fill="url(#gBG)"/>
<g clip-path="url(#cc)"><g filter="url(#b1)">
<rect x="565" y="380" width="211.5" height="132" fill="url(#gST)"/>
<path d="M433.5 523 Q434.5 513 446 511 L565 509 L776 508.5 L890 510 Q909.5 512 911 523 L911 628 Q910 632 890 633 L455 633 Q435 632 433.5 628 Z" fill="url(#gDT)"/>
<path d="M433.5 523 Q434.5 513 446 511 L565 509 L776 508.5 L890 510 Q909.5 512 911 523 L911 628 Q910 632 890 633 L455 633 Q435 632 433.5 628 Z" fill="url(#gV1)"/>
<path d="M433.5 523 Q434.5 513 446 511 L565 509 L565 521 L433.5 522 Z" fill="#000" opacity=".38"/>
<path d="M776 508.5 L890 510 Q909.5 512 911 523 L776 521 Z" fill="#000" opacity=".3"/>
<path d="M514 630 L858 630 L858 638 Q852 649 800 651 L565 651 Q520 649 514 638 Z" fill="url(#gDT)"/>
<path d="M514 630 L858 630 L858 638 Q852 649 800 651 L565 651 Q520 649 514 638 Z" fill="url(#gStep)"/>
<rect x="590" y="649" width="161" height="175" fill="url(#gSp)"/>
<rect x="563.5" y="935" width="209.5" height="95" fill="url(#gSB)"/>
<rect x="563.5" y="935" width="209.5" height="21" fill="#000" opacity=".6"/>
<ellipse cx="670" cy="810" rx="226" ry="18" fill="#2c2c2c"/><ellipse cx="670" cy="811" rx="222" ry="16" fill="#1f1f1f"/>
<rect x="590" y="780" width="161" height="45" fill="#494949"/>
<path d="M426.5 828 L446 806 A224 17.6 0 0 0 894 806 L913.5 828 A243.5 21 0 0 1 426.5 828 Z" fill="url(#gDB)"/>
<path d="M426.5 828 L446 806 A224 17.6 0 0 0 894 806 L913.5 828 A243.5 21 0 0 1 426.5 828 Z" fill="#000" opacity=".4"/>
<path d="M426.5 828 A243.5 21 0 0 0 913.5 828 L913.5 927 A243.5 21 0 0 1 426.5 927 Z" fill="url(#gDB)"/>
<path d="M426.5 828 A243.5 21 0 0 0 913.5 828 L913.5 927 A243.5 21 0 0 1 426.5 927 Z" fill="url(#gV2)"/>
</g>
<g filter="url(#b3)" fill="#fff">
<ellipse cx="598" cy="508" rx="14" ry="7"/>
<ellipse cx="633" cy="508" rx="10" ry="6"/>
<ellipse cx="684" cy="508" rx="14" ry="6"/>
<ellipse cx="732" cy="509" rx="11" ry="4"/>
<ellipse cx="518" cy="516" rx="34" ry="9"/>
<ellipse cx="520" cy="514" rx="22" ry="7"/>
<ellipse cx="798" cy="515" rx="22" ry="9"/>
<ellipse cx="798" cy="514" rx="15" ry="6"/>
<ellipse cx="840" cy="516" rx="22" ry="4" opacity=".55"/>
<ellipse cx="654" cy="520" rx="7" ry="5"/>
<ellipse cx="540" cy="643" rx="9" ry="5" opacity=".8"/>
<ellipse cx="785" cy="642" rx="15" ry="6"/>
<ellipse cx="785" cy="642" rx="9" ry="4"/>
<ellipse cx="519" cy="830" rx="31" ry="14"/>
<ellipse cx="519" cy="831" rx="26" ry="10"/>
<ellipse cx="790" cy="830" rx="28" ry="14"/>
<ellipse cx="790" cy="831" rx="23" ry="10"/>
<ellipse cx="588" cy="833" rx="18" ry="6" opacity=".8"/>
<ellipse cx="700" cy="835" rx="26" ry="6" opacity=".95"/>
<ellipse cx="458" cy="828" rx="6" ry="4" opacity=".9"/>
<rect x="648" y="520" width="12" height="122" opacity=".9"/>
<rect x="620" y="600" width="12" height="38" opacity=".5"/>
<rect x="565" y="606" width="52" height="13" opacity=".3"/>
<path d="M456 829 L472 814" stroke="#fff" stroke-width="3" opacity=".5"/>
<rect x="647" y="842" width="8" height="106" opacity=".95"/>
</g>
</g>
</svg>


<!-- ===== charts ===== -->
<svg class="a" style="left:1105px;top:80px" width="815" height="939" viewBox="1105 80 815 939" shape-rendering="auto">
<rect x="1105" y="390.6" width="813" height="1.9" fill="#737373"/>
<rect x="1105" y="392.5" width="813" height="2.5" fill="#fafafa"/>
<rect x="1105" y="395" width="813" height="1.9" fill="#737373"/>
<rect x="1105" y="396.9" width="813" height="2" fill="#fafafa"/>
<rect x="1105" y="706.6" width="813" height="1.9" fill="#737373"/>
<rect x="1105" y="708.5" width="813" height="2.5" fill="#fafafa"/>
<rect x="1105" y="711" width="813" height="1.9" fill="#737373"/>
<rect x="1105" y="712.9" width="813" height="2" fill="#fafafa"/>
<line x1="1148.5" y1="105" x2="1148.5" y2="351" stroke="#5a5a5a" stroke-width="1" stroke-dasharray="3 3" stroke-dashoffset="2"/>
<line x1="1148.5" y1="352" x2="1148.5" y2="356" stroke="#000" stroke-width="1"/>
<line x1="1184.5" y1="105" x2="1184.5" y2="351" stroke="#5a5a5a" stroke-width="1" stroke-dasharray="3 3" stroke-dashoffset="2"/>
<line x1="1184.5" y1="352" x2="1184.5" y2="356" stroke="#000" stroke-width="1"/>
<line x1="1220.5" y1="105" x2="1220.5" y2="351" stroke="#5a5a5a" stroke-width="1" stroke-dasharray="3 3" stroke-dashoffset="2"/>
<line x1="1220.5" y1="352" x2="1220.5" y2="356" stroke="#000" stroke-width="1"/>
<line x1="1257.5" y1="105" x2="1257.5" y2="351" stroke="#5a5a5a" stroke-width="1" stroke-dasharray="3 3" stroke-dashoffset="2"/>
<line x1="1257.5" y1="352" x2="1257.5" y2="356" stroke="#000" stroke-width="1"/>
<line x1="1293.5" y1="105" x2="1293.5" y2="351" stroke="#5a5a5a" stroke-width="1" stroke-dasharray="3 3" stroke-dashoffset="2"/>
<line x1="1293.5" y1="352" x2="1293.5" y2="356" stroke="#000" stroke-width="1"/>
<line x1="1330.5" y1="105" x2="1330.5" y2="351" stroke="#5a5a5a" stroke-width="1" stroke-dasharray="3 3" stroke-dashoffset="2"/>
<line x1="1330.5" y1="352" x2="1330.5" y2="356" stroke="#000" stroke-width="1"/>
<line x1="1366.5" y1="105" x2="1366.5" y2="351" stroke="#5a5a5a" stroke-width="1" stroke-dasharray="3 3" stroke-dashoffset="2"/>
<line x1="1366.5" y1="352" x2="1366.5" y2="356" stroke="#000" stroke-width="1"/>
<line x1="1403.5" y1="105" x2="1403.5" y2="351" stroke="#5a5a5a" stroke-width="1" stroke-dasharray="3 3" stroke-dashoffset="2"/>
<line x1="1403.5" y1="352" x2="1403.5" y2="356" stroke="#000" stroke-width="1"/>
<line x1="1439.5" y1="105" x2="1439.5" y2="351" stroke="#5a5a5a" stroke-width="1" stroke-dasharray="3 3" stroke-dashoffset="2"/>
<line x1="1439.5" y1="352" x2="1439.5" y2="356" stroke="#000" stroke-width="1"/>
<line x1="1476.5" y1="105" x2="1476.5" y2="351" stroke="#5a5a5a" stroke-width="1" stroke-dasharray="3 3" stroke-dashoffset="2"/>
<line x1="1476.5" y1="352" x2="1476.5" y2="356" stroke="#000" stroke-width="1"/>
<line x1="1512.5" y1="105" x2="1512.5" y2="351" stroke="#5a5a5a" stroke-width="1" stroke-dasharray="3 3" stroke-dashoffset="2"/>
<line x1="1512.5" y1="352" x2="1512.5" y2="356" stroke="#000" stroke-width="1"/>
<line x1="1548.5" y1="105" x2="1548.5" y2="351" stroke="#5a5a5a" stroke-width="1" stroke-dasharray="3 3" stroke-dashoffset="2"/>
<line x1="1548.5" y1="352" x2="1548.5" y2="356" stroke="#000" stroke-width="1"/>
<line x1="1585.5" y1="105" x2="1585.5" y2="351" stroke="#5a5a5a" stroke-width="1" stroke-dasharray="3 3" stroke-dashoffset="2"/>
<line x1="1585.5" y1="352" x2="1585.5" y2="356" stroke="#000" stroke-width="1"/>
<line x1="1621.5" y1="105" x2="1621.5" y2="351" stroke="#5a5a5a" stroke-width="1" stroke-dasharray="3 3" stroke-dashoffset="2"/>
<line x1="1621.5" y1="352" x2="1621.5" y2="356" stroke="#000" stroke-width="1"/>
<line x1="1658.5" y1="105" x2="1658.5" y2="351" stroke="#5a5a5a" stroke-width="1" stroke-dasharray="3 3" stroke-dashoffset="2"/>
<line x1="1658.5" y1="352" x2="1658.5" y2="356" stroke="#000" stroke-width="1"/>
<line x1="1694.5" y1="105" x2="1694.5" y2="351" stroke="#5a5a5a" stroke-width="1" stroke-dasharray="3 3" stroke-dashoffset="2"/>
<line x1="1694.5" y1="352" x2="1694.5" y2="356" stroke="#000" stroke-width="1"/>
<line x1="1731.5" y1="105" x2="1731.5" y2="351" stroke="#5a5a5a" stroke-width="1" stroke-dasharray="3 3" stroke-dashoffset="2"/>
<line x1="1731.5" y1="352" x2="1731.5" y2="356" stroke="#000" stroke-width="1"/>
<line x1="1767.5" y1="105" x2="1767.5" y2="351" stroke="#5a5a5a" stroke-width="1" stroke-dasharray="3 3" stroke-dashoffset="2"/>
<line x1="1767.5" y1="352" x2="1767.5" y2="356" stroke="#000" stroke-width="1"/>
<line x1="1804.5" y1="105" x2="1804.5" y2="351" stroke="#5a5a5a" stroke-width="1" stroke-dasharray="3 3" stroke-dashoffset="2"/>
<line x1="1804.5" y1="352" x2="1804.5" y2="356" stroke="#000" stroke-width="1"/>
<line x1="1840.5" y1="105" x2="1840.5" y2="351" stroke="#5a5a5a" stroke-width="1" stroke-dasharray="3 3" stroke-dashoffset="2"/>
<line x1="1840.5" y1="352" x2="1840.5" y2="356" stroke="#000" stroke-width="1"/>
<line x1="1146" y1="111.5" x2="1874" y2="111.5" stroke="#5a5a5a" stroke-width="1" stroke-dasharray="3 3" stroke-dashoffset="1"/>
<line x1="1141" y1="111.5" x2="1145" y2="111.5" stroke="#000" stroke-width="1"/>
<line x1="1146" y1="142.5" x2="1874" y2="142.5" stroke="#5a5a5a" stroke-width="1" stroke-dasharray="3 3" stroke-dashoffset="1"/>
<line x1="1141" y1="142.5" x2="1145" y2="142.5" stroke="#000" stroke-width="1"/>
<line x1="1146" y1="174.5" x2="1874" y2="174.5" stroke="#5a5a5a" stroke-width="1" stroke-dasharray="3 3" stroke-dashoffset="1"/>
<line x1="1141" y1="174.5" x2="1145" y2="174.5" stroke="#000" stroke-width="1"/>
<line x1="1146" y1="205.5" x2="1874" y2="205.5" stroke="#5a5a5a" stroke-width="1" stroke-dasharray="3 3" stroke-dashoffset="1"/>
<line x1="1141" y1="205.5" x2="1145" y2="205.5" stroke="#000" stroke-width="1"/>
<line x1="1146" y1="237.5" x2="1874" y2="237.5" stroke="#5a5a5a" stroke-width="1" stroke-dasharray="3 3" stroke-dashoffset="1"/>
<line x1="1141" y1="237.5" x2="1145" y2="237.5" stroke="#000" stroke-width="1"/>
<line x1="1146" y1="268.5" x2="1874" y2="268.5" stroke="#5a5a5a" stroke-width="1" stroke-dasharray="3 3" stroke-dashoffset="1"/>
<line x1="1141" y1="268.5" x2="1145" y2="268.5" stroke="#000" stroke-width="1"/>
<line x1="1146" y1="300.5" x2="1874" y2="300.5" stroke="#5a5a5a" stroke-width="1" stroke-dasharray="3 3" stroke-dashoffset="1"/>
<line x1="1141" y1="300.5" x2="1145" y2="300.5" stroke="#000" stroke-width="1"/>
<line x1="1146" y1="331.5" x2="1874" y2="331.5" stroke="#5a5a5a" stroke-width="1" stroke-dasharray="3 3" stroke-dashoffset="1"/>
<line x1="1141" y1="331.5" x2="1145" y2="331.5" stroke="#000" stroke-width="1"/>
<clipPath id="c1"><rect x="1146" y="105" width="728" height="246"/></clipPath>
<path d="M1144.4 303.6 L1146.2 300.1 L1148.0 296.9 L1149.8 294.0 L1151.6 289.4 L1153.5 285.0 L1155.3 281.0 L1157.1 276.9 L1158.9 273.6 L1160.8 269.6 L1162.6 266.4 L1164.4 263.0 L1166.2 257.2 L1168.0 252.0 L1169.9 247.1 L1171.7 242.8 L1173.5 238.6 L1175.3 232.9 L1177.2 228.7 L1179.0 224.9 L1180.8 219.9 L1182.6 215.3 L1184.5 209.7 L1186.3 204.7 L1188.1 200.5 L1189.9 196.4 L1191.7 194.2 L1193.6 190.2 L1195.4 184.4 L1197.2 178.3 L1199.0 172.2 L1200.9 167.8 L1202.7 163.3 L1204.5 158.1 L1206.3 154.6 L1208.1 150.6 L1210.0 146.9 L1211.8 142.3 L1213.6 135.8 L1215.4 130.7 L1217.3 125.0 L1219.1 119.5 L1220.9 116.4 L1222.7 121.3 L1224.5 127.9 L1226.4 134.2 L1228.2 140.7 L1230.0 148.1 L1231.8 153.2 L1233.7 158.9 L1235.5 166.0 L1237.3 172.4 L1239.1 179.4 L1240.9 184.8 L1242.8 190.3 L1244.6 196.9 L1246.4 201.5 L1248.2 206.7 L1250.1 211.7 L1251.9 216.6 L1253.7 222.6 L1255.5 227.3 L1257.4 232.6 L1259.2 238.1 L1261.0 242.8 L1262.8 248.7 L1264.6 253.8 L1266.5 258.7 L1268.3 263.3 L1270.1 266.3 L1271.9 270.1 L1273.8 274.1 L1275.6 278.2 L1277.4 283.0 L1279.2 286.4 L1281.0 289.4 L1282.9 292.3 L1284.7 294.8 L1286.5 299.0 L1288.3 303.2 L1290.2 307.3 L1292.0 311.3 L1293.8 313.9 L1295.6 316.5 L1297.4 318.8 L1299.3 320.7 L1301.1 323.2 L1302.9 324.8 L1304.7 326.6 L1306.6 328.7 L1308.4 330.3 L1310.2 332.4 L1312.0 333.6 L1313.8 334.7 L1315.7 336.2 L1317.5 336.9 L1319.3 338.0 L1321.1 338.7 L1323.0 338.9 L1324.8 339.5 L1326.6 339.5 L1328.4 339.9 L1330.3 340.3 L1332.1 340.0 L1333.9 339.7 L1335.7 338.7 L1337.5 337.9 L1339.4 337.3 L1341.2 335.9 L1343.0 334.7 L1344.8 332.8 L1346.7 330.2 L1348.5 327.7 L1350.3 324.3 L1352.1 321.4 L1353.9 318.4 L1355.8 314.4 L1357.6 311.8 L1359.4 309.2 L1361.2 306.7 L1363.1 304.1 L1364.9 300.2 L1366.7 296.9 L1368.5 293.1 L1370.3 288.8 L1372.2 285.1 L1374.0 281.0 L1375.8 277.6 L1377.6 274.0 L1379.5 269.6 L1381.3 266.5 L1383.1 262.3 L1384.9 257.1 L1386.7 251.9 L1388.6 246.5 L1390.4 243.0 L1392.2 238.8 L1394.0 233.7 L1395.9 229.7 L1397.7 224.6 L1399.5 219.4 L1401.3 213.9 L1403.2 208.5 L1405.0 205.3 L1406.8 201.6 L1408.6 198.0 L1410.4 195.0 L1412.3 189.4 L1414.1 183.5 L1415.9 176.6 L1417.7 171.5 L1419.6 168.6 L1421.4 164.2 L1423.2 159.7 L1425.0 155.1 L1426.8 150.4 L1428.7 146.2 L1430.5 140.2 L1432.3 134.7 L1434.1 131.2 L1436.0 126.5 L1437.8 121.7 L1439.6 116.7 L1441.4 120.6 L1443.2 126.6 L1445.1 132.1 L1446.9 140.3 L1448.7 149.1 L1450.5 155.0 L1452.4 160.3 L1454.2 165.1 L1456.0 171.7 L1457.8 178.8 L1459.6 183.9 L1461.5 190.4 L1463.3 197.2 L1465.1 202.7 L1466.9 207.5 L1468.8 211.0 L1470.6 216.5 L1472.4 222.2 L1474.2 226.6 L1476.1 232.4 L1477.9 238.2 L1479.7 244.2 L1481.5 249.3 L1483.3 252.9 L1485.2 258.3 L1487.0 263.1 L1488.8 266.5 L1490.6 270.2 L1492.5 273.9 L1494.3 278.8 L1496.1 282.8 L1497.9 285.7 L1499.7 289.7 L1501.6 292.8 L1503.4 295.3 L1505.2 298.4 L1507.0 302.2 L1508.9 307.7 L1510.7 311.5 L1512.5 314.1 L1514.3 316.8 L1516.1 318.9 L1518.0 321.0 L1519.8 322.5 L1521.6 324.1 L1523.4 327.0 L1525.3 328.9 L1527.1 330.4 L1528.9 332.3 L1530.7 333.9 L1532.5 335.3 L1534.4 335.5 L1536.2 336.2 L1538.0 338.0 L1539.8 338.9 L1541.7 339.3 L1543.5 339.5 L1545.3 339.7 L1547.1 340.1 L1549.0 339.7 L1550.8 339.6 L1552.6 339.9 L1554.4 339.2 L1556.2 338.2 L1558.1 336.8 L1559.9 335.9 L1561.7 335.1 L1563.5 332.6 L1565.4 330.1 L1567.2 327.7 L1569.0 324.6 L1570.8 321.4 L1572.6 317.5 L1574.5 314.7 L1576.3 312.7 L1578.1 309.3 L1579.9 306.5 L1581.8 303.7 L1583.6 300.7 L1585.4 296.8 L1587.2 291.8 L1589.0 288.7 L1590.9 286.0 L1592.7 281.9 L1594.5 277.9 L1596.3 273.6 L1598.2 269.9 L1600.0 265.6 L1601.8 260.4 L1603.6 257.2 L1605.4 253.6 L1607.3 248.5 L1609.1 243.1 L1610.9 237.3 L1612.7 233.4 L1614.6 228.8 L1616.4 223.4 L1618.2 219.9 L1620.0 215.6 L1621.9 210.5 L1623.7 204.9 L1625.5 200.0 L1627.3 198.0 L1629.1 194.3 L1631.0 188.3 L1632.8 183.3 L1634.6 178.2 L1636.4 174.1 L1638.3 168.3 L1640.1 162.5 L1641.9 159.0 L1643.7 154.4 L1645.5 150.0 L1647.4 146.3 L1649.2 141.9 L1651.0 137.0 L1652.8 130.1 L1654.7 124.6 L1656.5 121.3 L1658.3 117.1 L1660.1 120.9 L1661.9 125.8 L1663.8 132.7 L1665.6 142.1 L1667.4 148.8 L1669.2 154.1 L1671.1 160.1 L1672.9 165.3 L1674.7 171.4 L1676.5 177.2 L1678.3 184.6 L1680.2 192.5 L1682.0 197.4 L1683.8 201.9 L1685.6 206.7 L1687.5 211.4 L1689.3 216.5 L1691.1 220.6 L1692.9 226.9 L1694.8 233.8 L1696.6 238.8 L1698.4 244.1 L1700.2 248.8 L1702.0 253.4 L1703.9 257.7 L1705.7 260.9 L1707.5 266.5 L1709.3 271.9 L1711.2 275.6 L1713.0 279.0 L1714.8 281.7 L1716.6 285.5 L1718.4 288.9 L1720.3 291.5 L1722.1 295.7 L1723.9 299.8 L1725.7 303.6 L1727.6 307.4 L1729.4 310.4 L1731.2 314.2 L1733.0 316.5 L1734.8 318.1 L1736.7 320.9 L1738.5 323.3 L1740.3 325.5 L1742.1 327.0 L1744.0 328.1 L1745.8 330.3 L1747.6 332.0 L1749.4 333.5 L1751.2 335.2 L1753.1 336.2 L1754.9 337.2 L1756.7 337.5 L1758.5 338.0 L1760.4 339.3 L1762.2 339.7 L1764.0 339.9 L1765.8 339.9 L1767.7 339.8 L1769.5 340.0 L1771.3 339.4 L1773.1 338.8 L1774.9 338.4 L1776.8 337.2 L1778.6 336.1 L1780.4 334.5 L1782.2 332.5 L1784.1 330.6 L1785.9 327.3 L1787.7 324.3 L1789.5 321.4 L1791.3 318.2 L1793.2 315.2 L1795.0 312.0 L1796.8 309.0 L1798.6 306.6 L1800.5 303.2 L1802.3 300.5 L1804.1 297.2 L1805.9 293.2 L1807.7 289.2 L1809.6 284.5 L1811.4 281.0 L1813.2 277.9 L1815.0 274.0 L1816.9 270.4 L1818.7 265.7 L1820.5 261.3 L1822.3 257.2 L1824.1 252.1 L1826.0 248.1 L1827.8 243.3 L1829.6 238.0 L1831.4 233.4 L1833.3 228.5 L1835.1 224.6 L1836.9 220.2 L1838.7 214.5 L1840.6 209.7 L1842.4 204.5 L1844.2 200.8 L1846.0 198.2 L1847.8 194.2 L1849.7 189.5 L1851.5 183.3 L1853.3 177.3 L1855.1 173.4 L1857.0 168.2 L1858.8 163.5 L1860.6 158.6 L1862.4 153.7 L1864.2 150.8 L1866.1 146.9 L1867.9 142.5 L1869.7 136.6 L1871.5 129.3" fill="none" stroke="#f4c8c8" stroke-width="4" stroke-linejoin="round" stroke-linecap="round" clip-path="url(#c1)" opacity=".55"/>
<path d="M1144.4 303.6 L1146.2 300.1 L1148.0 296.9 L1149.8 294.0 L1151.6 289.4 L1153.5 285.0 L1155.3 281.0 L1157.1 276.9 L1158.9 273.6 L1160.8 269.6 L1162.6 266.4 L1164.4 263.0 L1166.2 257.2 L1168.0 252.0 L1169.9 247.1 L1171.7 242.8 L1173.5 238.6 L1175.3 232.9 L1177.2 228.7 L1179.0 224.9 L1180.8 219.9 L1182.6 215.3 L1184.5 209.7 L1186.3 204.7 L1188.1 200.5 L1189.9 196.4 L1191.7 194.2 L1193.6 190.2 L1195.4 184.4 L1197.2 178.3 L1199.0 172.2 L1200.9 167.8 L1202.7 163.3 L1204.5 158.1 L1206.3 154.6 L1208.1 150.6 L1210.0 146.9 L1211.8 142.3 L1213.6 135.8 L1215.4 130.7 L1217.3 125.0 L1219.1 119.5 L1220.9 116.4 L1222.7 121.3 L1224.5 127.9 L1226.4 134.2 L1228.2 140.7 L1230.0 148.1 L1231.8 153.2 L1233.7 158.9 L1235.5 166.0 L1237.3 172.4 L1239.1 179.4 L1240.9 184.8 L1242.8 190.3 L1244.6 196.9 L1246.4 201.5 L1248.2 206.7 L1250.1 211.7 L1251.9 216.6 L1253.7 222.6 L1255.5 227.3 L1257.4 232.6 L1259.2 238.1 L1261.0 242.8 L1262.8 248.7 L1264.6 253.8 L1266.5 258.7 L1268.3 263.3 L1270.1 266.3 L1271.9 270.1 L1273.8 274.1 L1275.6 278.2 L1277.4 283.0 L1279.2 286.4 L1281.0 289.4 L1282.9 292.3 L1284.7 294.8 L1286.5 299.0 L1288.3 303.2 L1290.2 307.3 L1292.0 311.3 L1293.8 313.9 L1295.6 316.5 L1297.4 318.8 L1299.3 320.7 L1301.1 323.2 L1302.9 324.8 L1304.7 326.6 L1306.6 328.7 L1308.4 330.3 L1310.2 332.4 L1312.0 333.6 L1313.8 334.7 L1315.7 336.2 L1317.5 336.9 L1319.3 338.0 L1321.1 338.7 L1323.0 338.9 L1324.8 339.5 L1326.6 339.5 L1328.4 339.9 L1330.3 340.3 L1332.1 340.0 L1333.9 339.7 L1335.7 338.7 L1337.5 337.9 L1339.4 337.3 L1341.2 335.9 L1343.0 334.7 L1344.8 332.8 L1346.7 330.2 L1348.5 327.7 L1350.3 324.3 L1352.1 321.4 L1353.9 318.4 L1355.8 314.4 L1357.6 311.8 L1359.4 309.2 L1361.2 306.7 L1363.1 304.1 L1364.9 300.2 L1366.7 296.9 L1368.5 293.1 L1370.3 288.8 L1372.2 285.1 L1374.0 281.0 L1375.8 277.6 L1377.6 274.0 L1379.5 269.6 L1381.3 266.5 L1383.1 262.3 L1384.9 257.1 L1386.7 251.9 L1388.6 246.5 L1390.4 243.0 L1392.2 238.8 L1394.0 233.7 L1395.9 229.7 L1397.7 224.6 L1399.5 219.4 L1401.3 213.9 L1403.2 208.5 L1405.0 205.3 L1406.8 201.6 L1408.6 198.0 L1410.4 195.0 L1412.3 189.4 L1414.1 183.5 L1415.9 176.6 L1417.7 171.5 L1419.6 168.6 L1421.4 164.2 L1423.2 159.7 L1425.0 155.1 L1426.8 150.4 L1428.7 146.2 L1430.5 140.2 L1432.3 134.7 L1434.1 131.2 L1436.0 126.5 L1437.8 121.7 L1439.6 116.7 L1441.4 120.6 L1443.2 126.6 L1445.1 132.1 L1446.9 140.3 L1448.7 149.1 L1450.5 155.0 L1452.4 160.3 L1454.2 165.1 L1456.0 171.7 L1457.8 178.8 L1459.6 183.9 L1461.5 190.4 L1463.3 197.2 L1465.1 202.7 L1466.9 207.5 L1468.8 211.0 L1470.6 216.5 L1472.4 222.2 L1474.2 226.6 L1476.1 232.4 L1477.9 238.2 L1479.7 244.2 L1481.5 249.3 L1483.3 252.9 L1485.2 258.3 L1487.0 263.1 L1488.8 266.5 L1490.6 270.2 L1492.5 273.9 L1494.3 278.8 L1496.1 282.8 L1497.9 285.7 L1499.7 289.7 L1501.6 292.8 L1503.4 295.3 L1505.2 298.4 L1507.0 302.2 L1508.9 307.7 L1510.7 311.5 L1512.5 314.1 L1514.3 316.8 L1516.1 318.9 L1518.0 321.0 L1519.8 322.5 L1521.6 324.1 L1523.4 327.0 L1525.3 328.9 L1527.1 330.4 L1528.9 332.3 L1530.7 333.9 L1532.5 335.3 L1534.4 335.5 L1536.2 336.2 L1538.0 338.0 L1539.8 338.9 L1541.7 339.3 L1543.5 339.5 L1545.3 339.7 L1547.1 340.1 L1549.0 339.7 L1550.8 339.6 L1552.6 339.9 L1554.4 339.2 L1556.2 338.2 L1558.1 336.8 L1559.9 335.9 L1561.7 335.1 L1563.5 332.6 L1565.4 330.1 L1567.2 327.7 L1569.0 324.6 L1570.8 321.4 L1572.6 317.5 L1574.5 314.7 L1576.3 312.7 L1578.1 309.3 L1579.9 306.5 L1581.8 303.7 L1583.6 300.7 L1585.4 296.8 L1587.2 291.8 L1589.0 288.7 L1590.9 286.0 L1592.7 281.9 L1594.5 277.9 L1596.3 273.6 L1598.2 269.9 L1600.0 265.6 L1601.8 260.4 L1603.6 257.2 L1605.4 253.6 L1607.3 248.5 L1609.1 243.1 L1610.9 237.3 L1612.7 233.4 L1614.6 228.8 L1616.4 223.4 L1618.2 219.9 L1620.0 215.6 L1621.9 210.5 L1623.7 204.9 L1625.5 200.0 L1627.3 198.0 L1629.1 194.3 L1631.0 188.3 L1632.8 183.3 L1634.6 178.2 L1636.4 174.1 L1638.3 168.3 L1640.1 162.5 L1641.9 159.0 L1643.7 154.4 L1645.5 150.0 L1647.4 146.3 L1649.2 141.9 L1651.0 137.0 L1652.8 130.1 L1654.7 124.6 L1656.5 121.3 L1658.3 117.1 L1660.1 120.9 L1661.9 125.8 L1663.8 132.7 L1665.6 142.1 L1667.4 148.8 L1669.2 154.1 L1671.1 160.1 L1672.9 165.3 L1674.7 171.4 L1676.5 177.2 L1678.3 184.6 L1680.2 192.5 L1682.0 197.4 L1683.8 201.9 L1685.6 206.7 L1687.5 211.4 L1689.3 216.5 L1691.1 220.6 L1692.9 226.9 L1694.8 233.8 L1696.6 238.8 L1698.4 244.1 L1700.2 248.8 L1702.0 253.4 L1703.9 257.7 L1705.7 260.9 L1707.5 266.5 L1709.3 271.9 L1711.2 275.6 L1713.0 279.0 L1714.8 281.7 L1716.6 285.5 L1718.4 288.9 L1720.3 291.5 L1722.1 295.7 L1723.9 299.8 L1725.7 303.6 L1727.6 307.4 L1729.4 310.4 L1731.2 314.2 L1733.0 316.5 L1734.8 318.1 L1736.7 320.9 L1738.5 323.3 L1740.3 325.5 L1742.1 327.0 L1744.0 328.1 L1745.8 330.3 L1747.6 332.0 L1749.4 333.5 L1751.2 335.2 L1753.1 336.2 L1754.9 337.2 L1756.7 337.5 L1758.5 338.0 L1760.4 339.3 L1762.2 339.7 L1764.0 339.9 L1765.8 339.9 L1767.7 339.8 L1769.5 340.0 L1771.3 339.4 L1773.1 338.8 L1774.9 338.4 L1776.8 337.2 L1778.6 336.1 L1780.4 334.5 L1782.2 332.5 L1784.1 330.6 L1785.9 327.3 L1787.7 324.3 L1789.5 321.4 L1791.3 318.2 L1793.2 315.2 L1795.0 312.0 L1796.8 309.0 L1798.6 306.6 L1800.5 303.2 L1802.3 300.5 L1804.1 297.2 L1805.9 293.2 L1807.7 289.2 L1809.6 284.5 L1811.4 281.0 L1813.2 277.9 L1815.0 274.0 L1816.9 270.4 L1818.7 265.7 L1820.5 261.3 L1822.3 257.2 L1824.1 252.1 L1826.0 248.1 L1827.8 243.3 L1829.6 238.0 L1831.4 233.4 L1833.3 228.5 L1835.1 224.6 L1836.9 220.2 L1838.7 214.5 L1840.6 209.7 L1842.4 204.5 L1844.2 200.8 L1846.0 198.2 L1847.8 194.2 L1849.7 189.5 L1851.5 183.3 L1853.3 177.3 L1855.1 173.4 L1857.0 168.2 L1858.8 163.5 L1860.6 158.6 L1862.4 153.7 L1864.2 150.8 L1866.1 146.9 L1867.9 142.5 L1869.7 136.6 L1871.5 129.3" fill="none" stroke="#8a1f1f" stroke-width="2" stroke-linejoin="round" stroke-linecap="round" clip-path="url(#c1)"/>
<rect x="1144" y="104" width="731" height="1" fill="#000"/>
<rect x="1874" y="104" width="1" height="248" fill="#000"/>
<rect x="1144" y="104" width="2" height="249" fill="#000"/>
<rect x="1144" y="351" width="731" height="2" fill="#000"/>
<text transform="translate(1148.5 367.0) scale(0.8 1)" font-family="Liberation Sans, sans-serif" font-size="13" text-anchor="middle" fill="#111">10</text>
<text transform="translate(1185.0 367.0) scale(0.8 1)" font-family="Liberation Sans, sans-serif" font-size="13" text-anchor="middle" fill="#111">11</text>
<text transform="translate(1221.4 367.0) scale(0.8 1)" font-family="Liberation Sans, sans-serif" font-size="13" text-anchor="middle" fill="#111">12</text>
<text transform="translate(1257.8 367.0) scale(0.8 1)" font-family="Liberation Sans, sans-serif" font-size="13" text-anchor="middle" fill="#111">13</text>
<text transform="translate(1294.3 367.0) scale(0.8 1)" font-family="Liberation Sans, sans-serif" font-size="13" text-anchor="middle" fill="#111">14</text>
<text transform="translate(1330.8 367.0) scale(0.8 1)" font-family="Liberation Sans, sans-serif" font-size="13" text-anchor="middle" fill="#111">15</text>
<text transform="translate(1367.2 367.0) scale(0.8 1)" font-family="Liberation Sans, sans-serif" font-size="13" text-anchor="middle" fill="#111">16</text>
<text transform="translate(1403.7 367.0) scale(0.8 1)" font-family="Liberation Sans, sans-serif" font-size="13" text-anchor="middle" fill="#111">17</text>
<text transform="translate(1440.1 367.0) scale(0.8 1)" font-family="Liberation Sans, sans-serif" font-size="13" text-anchor="middle" fill="#111">18</text>
<text transform="translate(1476.5 367.0) scale(0.8 1)" font-family="Liberation Sans, sans-serif" font-size="13" text-anchor="middle" fill="#111">19</text>
<text transform="translate(1513.0 367.0) scale(0.8 1)" font-family="Liberation Sans, sans-serif" font-size="13" text-anchor="middle" fill="#111">20</text>
<text transform="translate(1549.5 367.0) scale(0.8 1)" font-family="Liberation Sans, sans-serif" font-size="13" text-anchor="middle" fill="#111">21</text>
<text transform="translate(1585.9 367.0) scale(0.8 1)" font-family="Liberation Sans, sans-serif" font-size="13" text-anchor="middle" fill="#111">22</text>
<text transform="translate(1622.3 367.0) scale(0.8 1)" font-family="Liberation Sans, sans-serif" font-size="13" text-anchor="middle" fill="#111">23</text>
<text transform="translate(1658.8 367.0) scale(0.8 1)" font-family="Liberation Sans, sans-serif" font-size="13" text-anchor="middle" fill="#111">24</text>
<text transform="translate(1695.2 367.0) scale(0.8 1)" font-family="Liberation Sans, sans-serif" font-size="13" text-anchor="middle" fill="#111">25</text>
<text transform="translate(1731.7 367.0) scale(0.8 1)" font-family="Liberation Sans, sans-serif" font-size="13" text-anchor="middle" fill="#111">26</text>
<text transform="translate(1768.2 367.0) scale(0.8 1)" font-family="Liberation Sans, sans-serif" font-size="13" text-anchor="middle" fill="#111">27</text>
<text transform="translate(1804.6 367.0) scale(0.8 1)" font-family="Liberation Sans, sans-serif" font-size="13" text-anchor="middle" fill="#111">28</text>
<text transform="translate(1841.1 367.0) scale(0.8 1)" font-family="Liberation Sans, sans-serif" font-size="13" text-anchor="middle" fill="#111">29</text>
<text transform="translate(1133.0 115.8) scale(0.8 1)" font-family="Liberation Sans, sans-serif" font-size="13" text-anchor="start" fill="#111">0</text>
<text transform="translate(1133.0 147.3) scale(0.8 1)" font-family="Liberation Sans, sans-serif" font-size="13" text-anchor="start" fill="#111">-5</text>
<text transform="translate(1133.0 178.8) scale(0.8 1)" font-family="Liberation Sans, sans-serif" font-size="13" text-anchor="start" fill="#111">-10</text>
<text transform="translate(1133.0 210.3) scale(0.8 1)" font-family="Liberation Sans, sans-serif" font-size="13" text-anchor="start" fill="#111">-15</text>
<text transform="translate(1133.0 241.8) scale(0.8 1)" font-family="Liberation Sans, sans-serif" font-size="13" text-anchor="start" fill="#111">-20</text>
<text transform="translate(1133.0 273.4) scale(0.8 1)" font-family="Liberation Sans, sans-serif" font-size="13" text-anchor="start" fill="#111">-25</text>
<text transform="translate(1133.0 304.9) scale(0.8 1)" font-family="Liberation Sans, sans-serif" font-size="13" text-anchor="start" fill="#111">-30</text>
<text transform="translate(1133.0 336.4) scale(0.8 1)" font-family="Liberation Sans, sans-serif" font-size="13" text-anchor="start" fill="#111">-35</text>
<text x="1503.5" y="388" font-family="Liberation Sans, sans-serif" font-size="13" text-anchor="middle" fill="#111" textLength="50" lengthAdjust="spacingAndGlyphs">Time (S)</text>
<text transform="translate(1123 232) rotate(-90)" font-family="Liberation Sans, sans-serif" font-size="13" text-anchor="middle" fill="#111" textLength="54" lengthAdjust="spacingAndGlyphs">Force (N)</text>
<line x1="1192.5" y1="421" x2="1192.5" y2="667" stroke="#5a5a5a" stroke-width="1" stroke-dasharray="3 3" stroke-dashoffset="2"/>
<line x1="1192.5" y1="668" x2="1192.5" y2="672" stroke="#000" stroke-width="1"/>
<line x1="1228.5" y1="421" x2="1228.5" y2="667" stroke="#5a5a5a" stroke-width="1" stroke-dasharray="3 3" stroke-dashoffset="2"/>
<line x1="1228.5" y1="668" x2="1228.5" y2="672" stroke="#000" stroke-width="1"/>
<line x1="1264.5" y1="421" x2="1264.5" y2="667" stroke="#5a5a5a" stroke-width="1" stroke-dasharray="3 3" stroke-dashoffset="2"/>
<line x1="1264.5" y1="668" x2="1264.5" y2="672" stroke="#000" stroke-width="1"/>
<line x1="1300.5" y1="421" x2="1300.5" y2="667" stroke="#5a5a5a" stroke-width="1" stroke-dasharray="3 3" stroke-dashoffset="2"/>
<line x1="1300.5" y1="668" x2="1300.5" y2="672" stroke="#000" stroke-width="1"/>
<line x1="1336.5" y1="421" x2="1336.5" y2="667" stroke="#5a5a5a" stroke-width="1" stroke-dasharray="3 3" stroke-dashoffset="2"/>
<line x1="1336.5" y1="668" x2="1336.5" y2="672" stroke="#000" stroke-width="1"/>
<line x1="1372.5" y1="421" x2="1372.5" y2="667" stroke="#5a5a5a" stroke-width="1" stroke-dasharray="3 3" stroke-dashoffset="2"/>
<line x1="1372.5" y1="668" x2="1372.5" y2="672" stroke="#000" stroke-width="1"/>
<line x1="1407.5" y1="421" x2="1407.5" y2="667" stroke="#5a5a5a" stroke-width="1" stroke-dasharray="3 3" stroke-dashoffset="2"/>
<line x1="1407.5" y1="668" x2="1407.5" y2="672" stroke="#000" stroke-width="1"/>
<line x1="1443.5" y1="421" x2="1443.5" y2="667" stroke="#5a5a5a" stroke-width="1" stroke-dasharray="3 3" stroke-dashoffset="2"/>
<line x1="1443.5" y1="668" x2="1443.5" y2="672" stroke="#000" stroke-width="1"/>
<line x1="1479.5" y1="421" x2="1479.5" y2="667" stroke="#5a5a5a" stroke-width="1" stroke-dasharray="3 3" stroke-dashoffset="2"/>
<line x1="1479.5" y1="668" x2="1479.5" y2="672" stroke="#000" stroke-width="1"/>
<line x1="1515.5" y1="421" x2="1515.5" y2="667" stroke="#5a5a5a" stroke-width="1" stroke-dasharray="3 3" stroke-dashoffset="2"/>
<line x1="1515.5" y1="668" x2="1515.5" y2="672" stroke="#000" stroke-width="1"/>
<line x1="1551.5" y1="421" x2="1551.5" y2="667" stroke="#5a5a5a" stroke-width="1" stroke-dasharray="3 3" stroke-dashoffset="2"/>
<line x1="1551.5" y1="668" x2="1551.5" y2="672" stroke="#000" stroke-width="1"/>
<line x1="1587.5" y1="421" x2="1587.5" y2="667" stroke="#5a5a5a" stroke-width="1" stroke-dasharray="3 3" stroke-dashoffset="2"/>
<line x1="1587.5" y1="668" x2="1587.5" y2="672" stroke="#000" stroke-width="1"/>
<line x1="1623.5" y1="421" x2="1623.5" y2="667" stroke="#5a5a5a" stroke-width="1" stroke-dasharray="3 3" stroke-dashoffset="2"/>
<line x1="1623.5" y1="668" x2="1623.5" y2="672" stroke="#000" stroke-width="1"/>
<line x1="1658.5" y1="421" x2="1658.5" y2="667" stroke="#5a5a5a" stroke-width="1" stroke-dasharray="3 3" stroke-dashoffset="2"/>
<line x1="1658.5" y1="668" x2="1658.5" y2="672" stroke="#000" stroke-width="1"/>
<line x1="1694.5" y1="421" x2="1694.5" y2="667" stroke="#5a5a5a" stroke-width="1" stroke-dasharray="3 3" stroke-dashoffset="2"/>
<line x1="1694.5" y1="668" x2="1694.5" y2="672" stroke="#000" stroke-width="1"/>
<line x1="1730.5" y1="421" x2="1730.5" y2="667" stroke="#5a5a5a" stroke-width="1" stroke-dasharray="3 3" stroke-dashoffset="2"/>
<line x1="1730.5" y1="668" x2="1730.5" y2="672" stroke="#000" stroke-width="1"/>
<line x1="1766.5" y1="421" x2="1766.5" y2="667" stroke="#5a5a5a" stroke-width="1" stroke-dasharray="3 3" stroke-dashoffset="2"/>
<line x1="1766.5" y1="668" x2="1766.5" y2="672" stroke="#000" stroke-width="1"/>
<line x1="1802.5" y1="421" x2="1802.5" y2="667" stroke="#5a5a5a" stroke-width="1" stroke-dasharray="3 3" stroke-dashoffset="2"/>
<line x1="1802.5" y1="668" x2="1802.5" y2="672" stroke="#000" stroke-width="1"/>
<line x1="1838.5" y1="421" x2="1838.5" y2="667" stroke="#5a5a5a" stroke-width="1" stroke-dasharray="3 3" stroke-dashoffset="2"/>
<line x1="1838.5" y1="668" x2="1838.5" y2="672" stroke="#000" stroke-width="1"/>
<line x1="1874.5" y1="421" x2="1874.5" y2="667" stroke="#5a5a5a" stroke-width="1" stroke-dasharray="3 3" stroke-dashoffset="2"/>
<line x1="1874.5" y1="668" x2="1874.5" y2="672" stroke="#000" stroke-width="1"/>
<line x1="1158" y1="436.5" x2="1874" y2="436.5" stroke="#5a5a5a" stroke-width="1" stroke-dasharray="3 3" stroke-dashoffset="1"/>
<line x1="1153" y1="436.5" x2="1157" y2="436.5" stroke="#000" stroke-width="1"/>
<line x1="1158" y1="466.5" x2="1874" y2="466.5" stroke="#5a5a5a" stroke-width="1" stroke-dasharray="3 3" stroke-dashoffset="1"/>
<line x1="1153" y1="466.5" x2="1157" y2="466.5" stroke="#000" stroke-width="1"/>
<line x1="1158" y1="496.5" x2="1874" y2="496.5" stroke="#5a5a5a" stroke-width="1" stroke-dasharray="3 3" stroke-dashoffset="1"/>
<line x1="1153" y1="496.5" x2="1157" y2="496.5" stroke="#000" stroke-width="1"/>
<line x1="1158" y1="526.5" x2="1874" y2="526.5" stroke="#5a5a5a" stroke-width="1" stroke-dasharray="3 3" stroke-dashoffset="1"/>
<line x1="1153" y1="526.5" x2="1157" y2="526.5" stroke="#000" stroke-width="1"/>
<line x1="1158" y1="557.5" x2="1874" y2="557.5" stroke="#5a5a5a" stroke-width="1" stroke-dasharray="3 3" stroke-dashoffset="1"/>
<line x1="1153" y1="557.5" x2="1157" y2="557.5" stroke="#000" stroke-width="1"/>
<line x1="1158" y1="587.5" x2="1874" y2="587.5" stroke="#5a5a5a" stroke-width="1" stroke-dasharray="3 3" stroke-dashoffset="1"/>
<line x1="1153" y1="587.5" x2="1157" y2="587.5" stroke="#000" stroke-width="1"/>
<line x1="1158" y1="617.5" x2="1874" y2="617.5" stroke="#5a5a5a" stroke-width="1" stroke-dasharray="3 3" stroke-dashoffset="1"/>
<line x1="1153" y1="617.5" x2="1157" y2="617.5" stroke="#000" stroke-width="1"/>
<line x1="1158" y1="647.5" x2="1874" y2="647.5" stroke="#5a5a5a" stroke-width="1" stroke-dasharray="3 3" stroke-dashoffset="1"/>
<line x1="1153" y1="647.5" x2="1157" y2="647.5" stroke="#000" stroke-width="1"/>
<clipPath id="c2"><rect x="1158" y="421" width="716" height="246"/></clipPath>
<path d="M1155.2 635.1 L1157.0 632.1 L1158.8 629.1 L1160.6 625.9 L1162.4 622.7 L1164.2 619.3 L1166.0 615.7 L1167.8 612.1 L1169.5 608.2 L1171.3 604.3 L1173.1 600.3 L1174.9 596.2 L1176.7 592.0 L1178.5 587.7 L1180.3 583.4 L1182.1 578.9 L1183.9 574.3 L1185.7 569.6 L1187.5 564.7 L1189.3 559.7 L1191.1 554.7 L1192.9 549.6 L1194.6 544.4 L1196.4 539.2 L1198.2 533.8 L1200.0 528.5 L1201.8 523.0 L1203.6 517.5 L1205.4 511.9 L1207.2 506.3 L1209.0 500.7 L1210.8 495.0 L1212.6 489.2 L1214.4 483.5 L1216.2 477.7 L1217.9 471.8 L1219.7 466.0 L1221.5 460.1 L1223.3 454.2 L1225.1 448.3 L1226.9 442.4 L1228.7 436.5 L1230.5 442.4 L1232.3 448.3 L1234.1 454.2 L1235.9 460.1 L1237.7 466.0 L1239.5 471.9 L1241.2 477.7 L1243.0 483.5 L1244.8 489.3 L1246.6 495.1 L1248.4 500.8 L1250.2 506.4 L1252.0 512.0 L1253.8 517.5 L1255.6 523.0 L1257.4 528.4 L1259.2 533.8 L1261.0 539.1 L1262.8 544.3 L1264.6 549.4 L1266.3 554.5 L1268.1 559.5 L1269.9 564.4 L1271.7 569.2 L1273.5 574.0 L1275.3 578.6 L1277.1 583.2 L1278.9 587.7 L1280.7 592.1 L1282.5 596.4 L1284.3 600.6 L1286.1 604.7 L1287.9 608.6 L1289.6 612.4 L1291.4 616.0 L1293.2 619.5 L1295.0 622.9 L1296.8 626.2 L1298.6 629.4 L1300.4 632.4 L1302.2 635.3 L1304.0 638.1 L1305.8 640.6 L1307.6 643.0 L1309.4 645.2 L1311.2 647.3 L1312.9 649.3 L1314.7 651.1 L1316.5 652.9 L1318.3 654.6 L1320.1 656.1 L1321.9 657.5 L1323.7 658.7 L1325.5 659.7 L1327.3 660.5 L1329.1 661.1 L1330.9 661.7 L1332.7 662.1 L1334.5 662.4 L1336.3 662.7 L1338.0 662.8 L1339.8 662.7 L1341.6 662.3 L1343.4 661.8 L1345.2 661.0 L1347.0 660.0 L1348.8 658.9 L1350.6 657.6 L1352.4 656.3 L1354.2 654.9 L1356.0 653.3 L1357.8 651.6 L1359.6 649.7 L1361.3 647.5 L1363.1 645.2 L1364.9 642.7 L1366.7 640.1 L1368.5 637.4 L1370.3 634.7 L1372.1 631.9 L1373.9 629.1 L1375.7 626.1 L1377.5 622.9 L1379.3 619.5 L1381.1 615.9 L1382.9 612.2 L1384.6 608.4 L1386.4 604.5 L1388.2 600.5 L1390.0 596.4 L1391.8 592.3 L1393.6 588.0 L1395.4 583.6 L1397.2 579.1 L1399.0 574.3 L1400.8 569.5 L1402.6 564.5 L1404.4 559.5 L1406.2 554.5 L1408.0 549.4 L1409.7 544.3 L1411.5 539.1 L1413.3 533.9 L1415.1 528.5 L1416.9 523.0 L1418.7 517.5 L1420.5 511.9 L1422.3 506.2 L1424.1 500.6 L1425.9 494.9 L1427.7 489.2 L1429.5 483.5 L1431.3 477.7 L1433.0 471.9 L1434.8 466.0 L1436.6 460.1 L1438.4 454.2 L1440.2 448.3 L1442.0 442.4 L1443.8 436.5 L1445.6 442.4 L1447.4 448.4 L1449.2 454.3 L1451.0 460.2 L1452.8 466.1 L1454.6 471.9 L1456.3 477.7 L1458.1 483.5 L1459.9 489.2 L1461.7 494.9 L1463.5 500.6 L1465.3 506.3 L1467.1 511.9 L1468.9 517.5 L1470.7 523.0 L1472.5 528.4 L1474.3 533.7 L1476.1 538.9 L1477.9 544.1 L1479.7 549.3 L1481.4 554.5 L1483.2 559.6 L1485.0 564.7 L1486.8 569.7 L1488.6 574.5 L1490.4 579.2 L1492.2 583.6 L1494.0 588.0 L1495.8 592.2 L1497.6 596.3 L1499.4 600.5 L1501.2 604.5 L1503.0 608.5 L1504.7 612.3 L1506.5 616.0 L1508.3 619.5 L1510.1 622.8 L1511.9 625.9 L1513.7 628.9 L1515.5 631.8 L1517.3 634.7 L1519.1 637.6 L1520.9 640.4 L1522.7 643.0 L1524.5 645.5 L1526.3 647.7 L1528.0 649.7 L1529.8 651.5 L1531.6 653.1 L1533.4 654.6 L1535.2 656.0 L1537.0 657.4 L1538.8 658.7 L1540.6 659.9 L1542.4 660.9 L1544.2 661.7 L1546.0 662.2 L1547.8 662.5 L1549.6 662.6 L1551.4 662.5 L1553.1 662.4 L1554.9 662.3 L1556.7 662.0 L1558.5 661.6 L1560.3 661.0 L1562.1 660.2 L1563.9 659.1 L1565.7 657.7 L1567.5 656.1 L1569.3 654.5 L1571.1 652.7 L1572.9 650.9 L1574.7 649.1 L1576.4 647.2 L1578.2 645.1 L1580.0 642.9 L1581.8 640.5 L1583.6 637.9 L1585.4 635.1 L1587.2 632.2 L1589.0 629.2 L1590.8 626.1 L1592.6 623.0 L1594.4 619.7 L1596.2 616.3 L1598.0 612.7 L1599.7 608.9 L1601.5 604.9 L1603.3 600.7 L1605.1 596.4 L1606.9 592.0 L1608.7 587.6 L1610.5 583.1 L1612.3 578.6 L1614.1 573.9 L1615.9 569.2 L1617.7 564.4 L1619.5 559.5 L1621.3 554.5 L1623.1 549.4 L1624.8 544.2 L1626.6 539.0 L1628.4 533.8 L1630.2 528.4 L1632.0 523.1 L1633.8 517.6 L1635.6 512.1 L1637.4 506.5 L1639.2 500.8 L1641.0 495.0 L1642.8 489.3 L1644.6 483.5 L1646.4 477.7 L1648.1 471.8 L1649.9 466.0 L1651.7 460.1 L1653.5 454.2 L1655.3 448.3 L1657.1 442.4 L1658.9 436.5 L1660.7 442.4 L1662.5 448.3 L1664.3 454.2 L1666.1 460.1 L1667.9 466.0 L1669.7 471.9 L1671.4 477.7 L1673.2 483.5 L1675.0 489.3 L1676.8 495.0 L1678.6 500.6 L1680.4 506.3 L1682.2 511.8 L1684.0 517.4 L1685.8 522.9 L1687.6 528.3 L1689.4 533.8 L1691.2 539.1 L1693.0 544.4 L1694.8 549.6 L1696.5 554.7 L1698.3 559.8 L1700.1 564.7 L1701.9 569.6 L1703.7 574.3 L1705.5 579.0 L1707.3 583.5 L1709.1 587.9 L1710.9 592.2 L1712.7 596.4 L1714.5 600.4 L1716.3 604.3 L1718.1 608.2 L1719.8 611.9 L1721.6 615.5 L1723.4 619.1 L1725.2 622.5 L1727.0 625.8 L1728.8 629.1 L1730.6 632.2 L1732.4 635.2 L1734.2 638.0 L1736.0 640.7 L1737.8 643.3 L1739.6 645.7 L1741.4 647.9 L1743.1 649.9 L1744.9 651.7 L1746.7 653.4 L1748.5 654.9 L1750.3 656.3 L1752.1 657.5 L1753.9 658.7 L1755.7 659.6 L1757.5 660.4 L1759.3 661.1 L1761.1 661.6 L1762.9 662.0 L1764.7 662.3 L1766.5 662.4 L1768.2 662.5 L1770.0 662.4 L1771.8 662.1 L1773.6 661.6 L1775.4 660.9 L1777.2 660.1 L1779.0 659.0 L1780.8 657.7 L1782.6 656.3 L1784.4 654.7 L1786.2 653.1 L1788.0 651.3 L1789.8 649.4 L1791.5 647.4 L1793.3 645.2 L1795.1 642.9 L1796.9 640.4 L1798.7 637.7 L1800.5 635.0 L1802.3 632.1 L1804.1 629.2 L1805.9 626.2 L1807.7 623.0 L1809.5 619.7 L1811.3 616.2 L1813.1 612.5 L1814.8 608.6 L1816.6 604.6 L1818.4 600.5 L1820.2 596.2 L1822.0 591.9 L1823.8 587.6 L1825.6 583.2 L1827.4 578.7 L1829.2 574.0 L1831.0 569.3 L1832.8 564.5 L1834.6 559.5 L1836.4 554.5 L1838.2 549.4 L1839.9 544.3 L1841.7 539.1 L1843.5 533.9 L1845.3 528.6 L1847.1 523.2 L1848.9 517.7 L1850.7 512.1 L1852.5 506.4 L1854.3 500.7 L1856.1 494.9 L1857.9 489.2 L1859.7 483.4 L1861.5 477.6 L1863.2 471.8 L1865.0 466.0 L1866.8 460.1 L1868.6 454.2 L1870.4 448.3 L1872.2 442.4 L1874.0 436.5" fill="none" stroke="#f4c8c8" stroke-width="4" stroke-linejoin="round" stroke-linecap="round" clip-path="url(#c2)" opacity=".55"/>
<path d="M1155.2 635.1 L1157.0 632.1 L1158.8 629.1 L1160.6 625.9 L1162.4 622.7 L1164.2 619.3 L1166.0 615.7 L1167.8 612.1 L1169.5 608.2 L1171.3 604.3 L1173.1 600.3 L1174.9 596.2 L1176.7 592.0 L1178.5 587.7 L1180.3 583.4 L1182.1 578.9 L1183.9 574.3 L1185.7 569.6 L1187.5 564.7 L1189.3 559.7 L1191.1 554.7 L1192.9 549.6 L1194.6 544.4 L1196.4 539.2 L1198.2 533.8 L1200.0 528.5 L1201.8 523.0 L1203.6 517.5 L1205.4 511.9 L1207.2 506.3 L1209.0 500.7 L1210.8 495.0 L1212.6 489.2 L1214.4 483.5 L1216.2 477.7 L1217.9 471.8 L1219.7 466.0 L1221.5 460.1 L1223.3 454.2 L1225.1 448.3 L1226.9 442.4 L1228.7 436.5 L1230.5 442.4 L1232.3 448.3 L1234.1 454.2 L1235.9 460.1 L1237.7 466.0 L1239.5 471.9 L1241.2 477.7 L1243.0 483.5 L1244.8 489.3 L1246.6 495.1 L1248.4 500.8 L1250.2 506.4 L1252.0 512.0 L1253.8 517.5 L1255.6 523.0 L1257.4 528.4 L1259.2 533.8 L1261.0 539.1 L1262.8 544.3 L1264.6 549.4 L1266.3 554.5 L1268.1 559.5 L1269.9 564.4 L1271.7 569.2 L1273.5 574.0 L1275.3 578.6 L1277.1 583.2 L1278.9 587.7 L1280.7 592.1 L1282.5 596.4 L1284.3 600.6 L1286.1 604.7 L1287.9 608.6 L1289.6 612.4 L1291.4 616.0 L1293.2 619.5 L1295.0 622.9 L1296.8 626.2 L1298.6 629.4 L1300.4 632.4 L1302.2 635.3 L1304.0 638.1 L1305.8 640.6 L1307.6 643.0 L1309.4 645.2 L1311.2 647.3 L1312.9 649.3 L1314.7 651.1 L1316.5 652.9 L1318.3 654.6 L1320.1 656.1 L1321.9 657.5 L1323.7 658.7 L1325.5 659.7 L1327.3 660.5 L1329.1 661.1 L1330.9 661.7 L1332.7 662.1 L1334.5 662.4 L1336.3 662.7 L1338.0 662.8 L1339.8 662.7 L1341.6 662.3 L1343.4 661.8 L1345.2 661.0 L1347.0 660.0 L1348.8 658.9 L1350.6 657.6 L1352.4 656.3 L1354.2 654.9 L1356.0 653.3 L1357.8 651.6 L1359.6 649.7 L1361.3 647.5 L1363.1 645.2 L1364.9 642.7 L1366.7 640.1 L1368.5 637.4 L1370.3 634.7 L1372.1 631.9 L1373.9 629.1 L1375.7 626.1 L1377.5 622.9 L1379.3 619.5 L1381.1 615.9 L1382.9 612.2 L1384.6 608.4 L1386.4 604.5 L1388.2 600.5 L1390.0 596.4 L1391.8 592.3 L1393.6 588.0 L1395.4 583.6 L1397.2 579.1 L1399.0 574.3 L1400.8 569.5 L1402.6 564.5 L1404.4 559.5 L1406.2 554.5 L1408.0 549.4 L1409.7 544.3 L1411.5 539.1 L1413.3 533.9 L1415.1 528.5 L1416.9 523.0 L1418.7 517.5 L1420.5 511.9 L1422.3 506.2 L1424.1 500.6 L1425.9 494.9 L1427.7 489.2 L1429.5 483.5 L1431.3 477.7 L1433.0 471.9 L1434.8 466.0 L1436.6 460.1 L1438.4 454.2 L1440.2 448.3 L1442.0 442.4 L1443.8 436.5 L1445.6 442.4 L1447.4 448.4 L1449.2 454.3 L1451.0 460.2 L1452.8 466.1 L1454.6 471.9 L1456.3 477.7 L1458.1 483.5 L1459.9 489.2 L1461.7 494.9 L1463.5 500.6 L1465.3 506.3 L1467.1 511.9 L1468.9 517.5 L1470.7 523.0 L1472.5 528.4 L1474.3 533.7 L1476.1 538.9 L1477.9 544.1 L1479.7 549.3 L1481.4 554.5 L1483.2 559.6 L1485.0 564.7 L1486.8 569.7 L1488.6 574.5 L1490.4 579.2 L1492.2 583.6 L1494.0 588.0 L1495.8 592.2 L1497.6 596.3 L1499.4 600.5 L1501.2 604.5 L1503.0 608.5 L1504.7 612.3 L1506.5 616.0 L1508.3 619.5 L1510.1 622.8 L1511.9 625.9 L1513.7 628.9 L1515.5 631.8 L1517.3 634.7 L1519.1 637.6 L1520.9 640.4 L1522.7 643.0 L1524.5 645.5 L1526.3 647.7 L1528.0 649.7 L1529.8 651.5 L1531.6 653.1 L1533.4 654.6 L1535.2 656.0 L1537.0 657.4 L1538.8 658.7 L1540.6 659.9 L1542.4 660.9 L1544.2 661.7 L1546.0 662.2 L1547.8 662.5 L1549.6 662.6 L1551.4 662.5 L1553.1 662.4 L1554.9 662.3 L1556.7 662.0 L1558.5 661.6 L1560.3 661.0 L1562.1 660.2 L1563.9 659.1 L1565.7 657.7 L1567.5 656.1 L1569.3 654.5 L1571.1 652.7 L1572.9 650.9 L1574.7 649.1 L1576.4 647.2 L1578.2 645.1 L1580.0 642.9 L1581.8 640.5 L1583.6 637.9 L1585.4 635.1 L1587.2 632.2 L1589.0 629.2 L1590.8 626.1 L1592.6 623.0 L1594.4 619.7 L1596.2 616.3 L1598.0 612.7 L1599.7 608.9 L1601.5 604.9 L1603.3 600.7 L1605.1 596.4 L1606.9 592.0 L1608.7 587.6 L1610.5 583.1 L1612.3 578.6 L1614.1 573.9 L1615.9 569.2 L1617.7 564.4 L1619.5 559.5 L1621.3 554.5 L1623.1 549.4 L1624.8 544.2 L1626.6 539.0 L1628.4 533.8 L1630.2 528.4 L1632.0 523.1 L1633.8 517.6 L1635.6 512.1 L1637.4 506.5 L1639.2 500.8 L1641.0 495.0 L1642.8 489.3 L1644.6 483.5 L1646.4 477.7 L1648.1 471.8 L1649.9 466.0 L1651.7 460.1 L1653.5 454.2 L1655.3 448.3 L1657.1 442.4 L1658.9 436.5 L1660.7 442.4 L1662.5 448.3 L1664.3 454.2 L1666.1 460.1 L1667.9 466.0 L1669.7 471.9 L1671.4 477.7 L1673.2 483.5 L1675.0 489.3 L1676.8 495.0 L1678.6 500.6 L1680.4 506.3 L1682.2 511.8 L1684.0 517.4 L1685.8 522.9 L1687.6 528.3 L1689.4 533.8 L1691.2 539.1 L1693.0 544.4 L1694.8 549.6 L1696.5 554.7 L1698.3 559.8 L1700.1 564.7 L1701.9 569.6 L1703.7 574.3 L1705.5 579.0 L1707.3 583.5 L1709.1 587.9 L1710.9 592.2 L1712.7 596.4 L1714.5 600.4 L1716.3 604.3 L1718.1 608.2 L1719.8 611.9 L1721.6 615.5 L1723.4 619.1 L1725.2 622.5 L1727.0 625.8 L1728.8 629.1 L1730.6 632.2 L1732.4 635.2 L1734.2 638.0 L1736.0 640.7 L1737.8 643.3 L1739.6 645.7 L1741.4 647.9 L1743.1 649.9 L1744.9 651.7 L1746.7 653.4 L1748.5 654.9 L1750.3 656.3 L1752.1 657.5 L1753.9 658.7 L1755.7 659.6 L1757.5 660.4 L1759.3 661.1 L1761.1 661.6 L1762.9 662.0 L1764.7 662.3 L1766.5 662.4 L1768.2 662.5 L1770.0 662.4 L1771.8 662.1 L1773.6 661.6 L1775.4 660.9 L1777.2 660.1 L1779.0 659.0 L1780.8 657.7 L1782.6 656.3 L1784.4 654.7 L1786.2 653.1 L1788.0 651.3 L1789.8 649.4 L1791.5 647.4 L1793.3 645.2 L1795.1 642.9 L1796.9 640.4 L1798.7 637.7 L1800.5 635.0 L1802.3 632.1 L1804.1 629.2 L1805.9 626.2 L1807.7 623.0 L1809.5 619.7 L1811.3 616.2 L1813.1 612.5 L1814.8 608.6 L1816.6 604.6 L1818.4 600.5 L1820.2 596.2 L1822.0 591.9 L1823.8 587.6 L1825.6 583.2 L1827.4 578.7 L1829.2 574.0 L1831.0 569.3 L1832.8 564.5 L1834.6 559.5 L1836.4 554.5 L1838.2 549.4 L1839.9 544.3 L1841.7 539.1 L1843.5 533.9 L1845.3 528.6 L1847.1 523.2 L1848.9 517.7 L1850.7 512.1 L1852.5 506.4 L1854.3 500.7 L1856.1 494.9 L1857.9 489.2 L1859.7 483.4 L1861.5 477.6 L1863.2 471.8 L1865.0 466.0 L1866.8 460.1 L1868.6 454.2 L1870.4 448.3 L1872.2 442.4 L1874.0 436.5" fill="none" stroke="#8a1f1f" stroke-width="2" stroke-linejoin="round" stroke-linecap="round" clip-path="url(#c2)"/>
<rect x="1156" y="420" width="719" height="1" fill="#000"/>
<rect x="1874" y="420" width="1" height="248" fill="#000"/>
<rect x="1156" y="420" width="2" height="249" fill="#000"/>
<rect x="1156" y="667" width="719" height="2" fill="#000"/>
<text transform="translate(1192.0 683.0) scale(0.8 1)" font-family="Liberation Sans, sans-serif" font-size="13" text-anchor="middle" fill="#111">11</text>
<text transform="translate(1227.9 683.0) scale(0.8 1)" font-family="Liberation Sans, sans-serif" font-size="13" text-anchor="middle" fill="#111">12</text>
<text transform="translate(1263.8 683.0) scale(0.8 1)" font-family="Liberation Sans, sans-serif" font-size="13" text-anchor="middle" fill="#111">13</text>
<text transform="translate(1299.6 683.0) scale(0.8 1)" font-family="Liberation Sans, sans-serif" font-size="13" text-anchor="middle" fill="#111">14</text>
<text transform="translate(1335.5 683.0) scale(0.8 1)" font-family="Liberation Sans, sans-serif" font-size="13" text-anchor="middle" fill="#111">15</text>
<text transform="translate(1371.3 683.0) scale(0.8 1)" font-family="Liberation Sans, sans-serif" font-size="13" text-anchor="middle" fill="#111">16</text>
<text transform="translate(1407.2 683.0) scale(0.8 1)" font-family="Liberation Sans, sans-serif" font-size="13" text-anchor="middle" fill="#111">17</text>
<text transform="translate(1443.0 683.0) scale(0.8 1)" font-family="Liberation Sans, sans-serif" font-size="13" text-anchor="middle" fill="#111">18</text>
<text transform="translate(1478.9 683.0) scale(0.8 1)" font-family="Liberation Sans, sans-serif" font-size="13" text-anchor="middle" fill="#111">19</text>
<text transform="translate(1514.7 683.0) scale(0.8 1)" font-family="Liberation Sans, sans-serif" font-size="13" text-anchor="middle" fill="#111">20</text>
<text transform="translate(1550.5 683.0) scale(0.8 1)" font-family="Liberation Sans, sans-serif" font-size="13" text-anchor="middle" fill="#111">21</text>
<text transform="translate(1586.4 683.0) scale(0.8 1)" font-family="Liberation Sans, sans-serif" font-size="13" text-anchor="middle" fill="#111">22</text>
<text transform="translate(1622.2 683.0) scale(0.8 1)" font-family="Liberation Sans, sans-serif" font-size="13" text-anchor="middle" fill="#111">23</text>
<text transform="translate(1658.1 683.0) scale(0.8 1)" font-family="Liberation Sans, sans-serif" font-size="13" text-anchor="middle" fill="#111">24</text>
<text transform="translate(1694.0 683.0) scale(0.8 1)" font-family="Liberation Sans, sans-serif" font-size="13" text-anchor="middle" fill="#111">25</text>
<text transform="translate(1729.8 683.0) scale(0.8 1)" font-family="Liberation Sans, sans-serif" font-size="13" text-anchor="middle" fill="#111">26</text>
<text transform="translate(1765.7 683.0) scale(0.8 1)" font-family="Liberation Sans, sans-serif" font-size="13" text-anchor="middle" fill="#111">27</text>
<text transform="translate(1801.5 683.0) scale(0.8 1)" font-family="Liberation Sans, sans-serif" font-size="13" text-anchor="middle" fill="#111">28</text>
<text transform="translate(1837.4 683.0) scale(0.8 1)" font-family="Liberation Sans, sans-serif" font-size="13" text-anchor="middle" fill="#111">29</text>
<text transform="translate(1873.2 683.0) scale(0.8 1)" font-family="Liberation Sans, sans-serif" font-size="13" text-anchor="middle" fill="#111">30</text>
<text transform="translate(1133.0 441.1) scale(0.8 1)" font-family="Liberation Sans, sans-serif" font-size="13" text-anchor="start" fill="#111">0.0</text>
<text transform="translate(1133.0 471.2) scale(0.8 1)" font-family="Liberation Sans, sans-serif" font-size="13" text-anchor="start" fill="#111">-0.2</text>
<text transform="translate(1133.0 501.4) scale(0.8 1)" font-family="Liberation Sans, sans-serif" font-size="13" text-anchor="start" fill="#111">-0.4</text>
<text transform="translate(1133.0 531.5) scale(0.8 1)" font-family="Liberation Sans, sans-serif" font-size="13" text-anchor="start" fill="#111">-0.6</text>
<text transform="translate(1133.0 561.7) scale(0.8 1)" font-family="Liberation Sans, sans-serif" font-size="13" text-anchor="start" fill="#111">-0.8</text>
<text transform="translate(1133.0 591.8) scale(0.8 1)" font-family="Liberation Sans, sans-serif" font-size="13" text-anchor="start" fill="#111">-1.0</text>
<text transform="translate(1133.0 621.9) scale(0.8 1)" font-family="Liberation Sans, sans-serif" font-size="13" text-anchor="start" fill="#111">-1.2</text>
<text transform="translate(1133.0 652.1) scale(0.8 1)" font-family="Liberation Sans, sans-serif" font-size="13" text-anchor="start" fill="#111">-1.4</text>
<text x="1509" y="704" font-family="Liberation Sans, sans-serif" font-size="13" text-anchor="middle" fill="#111" textLength="50" lengthAdjust="spacingAndGlyphs">Time (S)</text>
<text transform="translate(1123 547) rotate(-90)" font-family="Liberation Sans, sans-serif" font-size="13" text-anchor="middle" fill="#111" textLength="112" lengthAdjust="spacingAndGlyphs">Displacement (mm)</text>
<line x1="1160.5" y1="737" x2="1160.5" y2="983" stroke="#5a5a5a" stroke-width="1" stroke-dasharray="3 3" stroke-dashoffset="2"/>
<line x1="1160.5" y1="984" x2="1160.5" y2="988" stroke="#000" stroke-width="1"/>
<line x1="1204.5" y1="737" x2="1204.5" y2="983" stroke="#5a5a5a" stroke-width="1" stroke-dasharray="3 3" stroke-dashoffset="2"/>
<line x1="1204.5" y1="984" x2="1204.5" y2="988" stroke="#000" stroke-width="1"/>
<line x1="1249.5" y1="737" x2="1249.5" y2="983" stroke="#5a5a5a" stroke-width="1" stroke-dasharray="3 3" stroke-dashoffset="2"/>
<line x1="1249.5" y1="984" x2="1249.5" y2="988" stroke="#000" stroke-width="1"/>
<line x1="1293.5" y1="737" x2="1293.5" y2="983" stroke="#5a5a5a" stroke-width="1" stroke-dasharray="3 3" stroke-dashoffset="2"/>
<line x1="1293.5" y1="984" x2="1293.5" y2="988" stroke="#000" stroke-width="1"/>
<line x1="1338.5" y1="737" x2="1338.5" y2="983" stroke="#5a5a5a" stroke-width="1" stroke-dasharray="3 3" stroke-dashoffset="2"/>
<line x1="1338.5" y1="984" x2="1338.5" y2="988" stroke="#000" stroke-width="1"/>
<line x1="1382.5" y1="737" x2="1382.5" y2="983" stroke="#5a5a5a" stroke-width="1" stroke-dasharray="3 3" stroke-dashoffset="2"/>
<line x1="1382.5" y1="984" x2="1382.5" y2="988" stroke="#000" stroke-width="1"/>
<line x1="1426.5" y1="737" x2="1426.5" y2="983" stroke="#5a5a5a" stroke-width="1" stroke-dasharray="3 3" stroke-dashoffset="2"/>
<line x1="1426.5" y1="984" x2="1426.5" y2="988" stroke="#000" stroke-width="1"/>
<line x1="1471.5" y1="737" x2="1471.5" y2="983" stroke="#5a5a5a" stroke-width="1" stroke-dasharray="3 3" stroke-dashoffset="2"/>
<line x1="1471.5" y1="984" x2="1471.5" y2="988" stroke="#000" stroke-width="1"/>
<line x1="1515.5" y1="737" x2="1515.5" y2="983" stroke="#5a5a5a" stroke-width="1" stroke-dasharray="3 3" stroke-dashoffset="2"/>
<line x1="1515.5" y1="984" x2="1515.5" y2="988" stroke="#000" stroke-width="1"/>
<line x1="1560.5" y1="737" x2="1560.5" y2="983" stroke="#5a5a5a" stroke-width="1" stroke-dasharray="3 3" stroke-dashoffset="2"/>
<line x1="1560.5" y1="984" x2="1560.5" y2="988" stroke="#000" stroke-width="1"/>
<line x1="1604.5" y1="737" x2="1604.5" y2="983" stroke="#5a5a5a" stroke-width="1" stroke-dasharray="3 3" stroke-dashoffset="2"/>
<line x1="1604.5" y1="984" x2="1604.5" y2="988" stroke="#000" stroke-width="1"/>
<line x1="1648.5" y1="737" x2="1648.5" y2="983" stroke="#5a5a5a" stroke-width="1" stroke-dasharray="3 3" stroke-dashoffset="2"/>
<line x1="1648.5" y1="984" x2="1648.5" y2="988" stroke="#000" stroke-width="1"/>
<line x1="1693.5" y1="737" x2="1693.5" y2="983" stroke="#5a5a5a" stroke-width="1" stroke-dasharray="3 3" stroke-dashoffset="2"/>
<line x1="1693.5" y1="984" x2="1693.5" y2="988" stroke="#000" stroke-width="1"/>
<line x1="1737.5" y1="737" x2="1737.5" y2="983" stroke="#5a5a5a" stroke-width="1" stroke-dasharray="3 3" stroke-dashoffset="2"/>
<line x1="1737.5" y1="984" x2="1737.5" y2="988" stroke="#000" stroke-width="1"/>
<line x1="1782.5" y1="737" x2="1782.5" y2="983" stroke="#5a5a5a" stroke-width="1" stroke-dasharray="3 3" stroke-dashoffset="2"/>
<line x1="1782.5" y1="984" x2="1782.5" y2="988" stroke="#000" stroke-width="1"/>
<line x1="1826.5" y1="737" x2="1826.5" y2="983" stroke="#5a5a5a" stroke-width="1" stroke-dasharray="3 3" stroke-dashoffset="2"/>
<line x1="1826.5" y1="984" x2="1826.5" y2="988" stroke="#000" stroke-width="1"/>
<line x1="1870.5" y1="737" x2="1870.5" y2="983" stroke="#5a5a5a" stroke-width="1" stroke-dasharray="3 3" stroke-dashoffset="2"/>
<line x1="1870.5" y1="984" x2="1870.5" y2="988" stroke="#000" stroke-width="1"/>
<line x1="1146" y1="743.5" x2="1871" y2="743.5" stroke="#5a5a5a" stroke-width="1" stroke-dasharray="3 3" stroke-dashoffset="1"/>
<line x1="1141" y1="743.5" x2="1145" y2="743.5" stroke="#000" stroke-width="1"/>
<line x1="1146" y1="774.5" x2="1871" y2="774.5" stroke="#5a5a5a" stroke-width="1" stroke-dasharray="3 3" stroke-dashoffset="1"/>
<line x1="1141" y1="774.5" x2="1145" y2="774.5" stroke="#000" stroke-width="1"/>
<line x1="1146" y1="806.5" x2="1871" y2="806.5" stroke="#5a5a5a" stroke-width="1" stroke-dasharray="3 3" stroke-dashoffset="1"/>
<line x1="1141" y1="806.5" x2="1145" y2="806.5" stroke="#000" stroke-width="1"/>
<line x1="1146" y1="838.5" x2="1871" y2="838.5" stroke="#5a5a5a" stroke-width="1" stroke-dasharray="3 3" stroke-dashoffset="1"/>
<line x1="1141" y1="838.5" x2="1145" y2="838.5" stroke="#000" stroke-width="1"/>
<line x1="1146" y1="869.5" x2="1871" y2="869.5" stroke="#5a5a5a" stroke-width="1" stroke-dasharray="3 3" stroke-dashoffset="1"/>
<line x1="1141" y1="869.5" x2="1145" y2="869.5" stroke="#000" stroke-width="1"/>
<line x1="1146" y1="901.5" x2="1871" y2="901.5" stroke="#5a5a5a" stroke-width="1" stroke-dasharray="3 3" stroke-dashoffset="1"/>
<line x1="1141" y1="901.5" x2="1145" y2="901.5" stroke="#000" stroke-width="1"/>
<line x1="1146" y1="932.5" x2="1871" y2="932.5" stroke="#5a5a5a" stroke-width="1" stroke-dasharray="3 3" stroke-dashoffset="1"/>
<line x1="1141" y1="932.5" x2="1145" y2="932.5" stroke="#000" stroke-width="1"/>
<line x1="1146" y1="964.5" x2="1871" y2="964.5" stroke="#5a5a5a" stroke-width="1" stroke-dasharray="3 3" stroke-dashoffset="1"/>
<line x1="1141" y1="964.5" x2="1145" y2="964.5" stroke="#000" stroke-width="1"/>
<clipPath id="c3"><rect x="1146" y="737" width="725" height="246"/></clipPath>
<path d="M1160.4 972.6 L1164.8 970.6 L1169.3 968.3 L1173.7 965.8 L1178.2 963.2 L1182.6 960.5 L1187.0 957.8 L1191.5 955.0 L1195.9 952.4 L1200.4 949.8 L1204.8 947.3 L1209.2 945.4 L1213.7 943.6 L1218.1 941.8 L1222.6 940.0 L1227.0 938.3 L1231.4 936.6 L1235.9 934.9 L1240.3 933.1 L1244.8 931.4 L1249.2 929.7 L1253.6 927.8 L1258.1 926.0 L1262.5 924.1 L1267.0 922.3 L1271.4 920.4 L1275.8 918.6 L1280.3 916.7 L1284.7 914.9 L1289.2 913.1 L1293.6 911.3 L1298.0 909.8 L1302.5 908.2 L1306.9 906.7 L1311.4 905.2 L1315.8 903.7 L1320.2 902.2 L1324.7 900.7 L1329.1 899.2 L1333.6 897.7 L1338.0 896.2 L1342.4 894.6 L1346.9 892.9 L1351.3 891.3 L1355.8 889.6 L1360.2 888.0 L1364.6 886.3 L1369.1 884.7 L1373.5 883.0 L1378.0 881.4 L1382.4 879.7 L1386.8 878.1 L1391.3 876.4 L1395.7 874.8 L1400.2 873.1 L1404.6 871.4 L1409.0 869.8 L1413.5 868.1 L1417.9 866.5 L1422.4 864.9 L1426.8 863.3 L1431.2 861.9 L1435.7 860.6 L1440.1 859.3 L1444.6 857.9 L1449.0 856.7 L1453.4 855.4 L1457.9 854.1 L1462.3 852.7 L1466.8 851.4 L1471.2 850.1 L1475.6 848.6 L1480.1 847.0 L1484.5 845.5 L1489.0 843.9 L1493.4 842.4 L1497.8 840.8 L1502.3 839.3 L1506.7 837.8 L1511.2 836.3 L1515.6 834.9 L1520.0 833.8 L1524.5 832.9 L1528.9 831.9 L1533.4 831.1 L1537.8 830.2 L1542.2 829.3 L1546.7 828.4 L1551.1 827.5 L1555.6 826.5 L1560.0 825.4 L1564.4 824.0 L1568.9 822.4 L1573.3 820.9 L1577.8 819.2 L1582.2 817.6 L1586.6 816.0 L1591.1 814.3 L1595.5 812.7 L1600.0 811.1 L1604.4 809.6 L1608.8 808.4 L1613.3 807.1 L1617.7 805.9 L1622.2 804.7 L1626.6 803.5 L1631.0 802.4 L1635.5 801.2 L1639.9 800.0 L1644.4 798.8 L1648.8 797.6 L1653.2 796.4 L1657.7 795.1 L1662.1 793.8 L1666.6 792.5 L1671.0 791.3 L1675.4 790.0 L1679.9 788.7 L1684.3 787.5 L1688.8 786.2 L1693.2 785.0 L1697.6 783.9 L1702.1 782.8 L1706.5 781.8 L1711.0 780.7 L1715.4 779.7 L1719.8 778.6 L1724.3 777.6 L1728.7 776.5 L1733.2 775.4 L1737.6 774.3 L1742.0 772.9 L1746.5 771.6 L1750.9 770.2 L1755.4 768.7 L1759.8 767.3 L1764.2 765.9 L1768.7 764.5 L1773.1 763.1 L1777.6 761.7 L1782.0 760.4 L1786.4 759.1 L1790.9 757.9 L1795.3 756.7 L1799.8 755.4 L1804.2 754.2 L1808.6 753.1 L1813.1 751.9 L1817.5 750.9 L1822.0 749.9 L1826.4 749.0" fill="none" stroke="#f6cfcf" stroke-width="6" stroke-linejoin="round" stroke-linecap="round" clip-path="url(#c3)" opacity=".7"/>
<path d="M1160.4 972.6 L1164.8 971.5 L1169.3 970.4 L1173.7 969.1 L1178.2 967.8 L1182.6 966.4 L1187.0 964.9 L1191.5 963.5 L1195.9 962.1 L1200.4 960.7 L1204.8 959.3 L1209.2 958.1 L1213.7 956.8 L1218.1 955.6 L1222.6 954.4 L1227.0 953.1 L1231.4 951.9 L1235.9 950.7 L1240.3 949.4 L1244.8 948.1 L1249.2 946.7 L1253.6 945.1 L1258.1 943.4 L1262.5 941.7 L1267.0 940.0 L1271.4 938.2 L1275.8 936.4 L1280.3 934.7 L1284.7 933.0 L1289.2 931.3 L1293.6 929.7 L1298.0 928.2 L1302.5 926.9 L1306.9 925.5 L1311.4 924.2 L1315.8 922.9 L1320.2 921.6 L1324.7 920.3 L1329.1 919.0 L1333.6 917.7 L1338.0 916.4 L1342.4 915.0 L1346.9 913.6 L1351.3 912.2 L1355.8 910.8 L1360.2 909.4 L1364.6 908.0 L1369.1 906.6 L1373.5 905.3 L1378.0 903.9 L1382.4 902.5 L1386.8 901.2 L1391.3 899.8 L1395.7 898.5 L1400.2 897.2 L1404.6 895.9 L1409.0 894.6 L1413.5 893.3 L1417.9 892.0 L1422.4 890.6 L1426.8 889.2 L1431.2 887.6 L1435.7 886.0 L1440.1 884.4 L1444.6 882.7 L1449.0 881.1 L1453.4 879.4 L1457.9 877.7 L1462.3 876.1 L1466.8 874.4 L1471.2 872.8 L1475.6 871.2 L1480.1 869.7 L1484.5 868.1 L1489.0 866.6 L1493.4 865.0 L1497.8 863.5 L1502.3 861.9 L1506.7 860.4 L1511.2 858.9 L1515.6 857.3 L1520.0 855.8 L1524.5 854.3 L1528.9 852.8 L1533.4 851.3 L1537.8 849.8 L1542.2 848.3 L1546.7 846.9 L1551.1 845.4 L1555.6 843.9 L1560.0 842.5 L1564.4 841.1 L1568.9 839.8 L1573.3 838.5 L1577.8 837.2 L1582.2 835.9 L1586.6 834.6 L1591.1 833.3 L1595.5 832.0 L1600.0 830.6 L1604.4 829.2 L1608.8 827.6 L1613.3 825.9 L1617.7 824.2 L1622.2 822.5 L1626.6 820.8 L1631.0 819.0 L1635.5 817.3 L1639.9 815.6 L1644.4 813.8 L1648.8 812.2 L1653.2 810.5 L1657.7 809.0 L1662.1 807.4 L1666.6 805.8 L1671.0 804.2 L1675.4 802.6 L1679.9 801.1 L1684.3 799.5 L1688.8 797.9 L1693.2 796.4 L1697.6 794.8 L1702.1 793.3 L1706.5 791.9 L1711.0 790.4 L1715.4 788.9 L1719.8 787.4 L1724.3 785.9 L1728.7 784.4 L1733.2 782.8 L1737.6 781.2 L1742.0 779.3 L1746.5 777.4 L1750.9 775.4 L1755.4 773.4 L1759.8 771.3 L1764.2 769.3 L1768.7 767.3 L1773.1 765.3 L1777.6 763.4 L1782.0 761.6 L1786.4 760.2 L1790.9 758.8 L1795.3 757.4 L1799.8 756.0 L1804.2 754.7 L1808.6 753.4 L1813.1 752.2 L1817.5 751.1 L1822.0 750.0 L1826.4 749.0" fill="none" stroke="#f6cfcf" stroke-width="6" stroke-linejoin="round" stroke-linecap="round" clip-path="url(#c3)" opacity=".7"/>
<path d="M1160.4 972.6 L1164.8 971.7 L1169.3 970.7 L1173.7 969.6 L1178.2 968.5 L1182.6 967.3 L1187.0 966.1 L1191.5 964.8 L1195.9 963.6 L1200.4 962.4 L1204.8 961.2 L1209.2 960.1 L1213.7 958.9 L1218.1 957.7 L1222.6 956.5 L1227.0 955.4 L1231.4 954.2 L1235.9 953.0 L1240.3 951.8 L1244.8 950.5 L1249.2 949.2 L1253.6 947.7 L1258.1 946.2 L1262.5 944.6 L1267.0 943.0 L1271.4 941.4 L1275.8 939.7 L1280.3 938.1 L1284.7 936.5 L1289.2 935.0 L1293.6 933.4 L1298.0 932.1 L1302.5 930.8 L1306.9 929.6 L1311.4 928.3 L1315.8 927.1 L1320.2 925.8 L1324.7 924.6 L1329.1 923.3 L1333.6 922.1 L1338.0 920.8 L1342.4 919.4 L1346.9 918.1 L1351.3 916.7 L1355.8 915.3 L1360.2 913.9 L1364.6 912.5 L1369.1 911.1 L1373.5 909.7 L1378.0 908.3 L1382.4 906.9 L1386.8 905.6 L1391.3 904.3 L1395.7 902.9 L1400.2 901.6 L1404.6 900.3 L1409.0 899.0 L1413.5 897.7 L1417.9 896.4 L1422.4 895.0 L1426.8 893.6 L1431.2 892.2 L1435.7 890.7 L1440.1 889.1 L1444.6 887.6 L1449.0 886.1 L1453.4 884.5 L1457.9 883.0 L1462.3 881.5 L1466.8 880.0 L1471.2 878.5 L1475.6 877.1 L1480.1 875.7 L1484.5 874.4 L1489.0 873.0 L1493.4 871.7 L1497.8 870.3 L1502.3 869.0 L1506.7 867.6 L1511.2 866.3 L1515.6 864.9 L1520.0 863.4 L1524.5 862.0 L1528.9 860.5 L1533.4 859.0 L1537.8 857.5 L1542.2 856.0 L1546.7 854.5 L1551.1 853.0 L1555.6 851.5 L1560.0 850.1 L1564.4 848.7 L1568.9 847.3 L1573.3 845.9 L1577.8 844.5 L1582.2 843.1 L1586.6 841.8 L1591.1 840.4 L1595.5 839.0 L1600.0 837.6 L1604.4 836.2 L1608.8 834.6 L1613.3 833.1 L1617.7 831.5 L1622.2 829.9 L1626.6 828.3 L1631.0 826.7 L1635.5 825.1 L1639.9 823.5 L1644.4 821.9 L1648.8 820.4 L1653.2 818.8 L1657.7 817.3 L1662.1 815.8 L1666.6 814.2 L1671.0 812.7 L1675.4 811.2 L1679.9 809.7 L1684.3 808.2 L1688.8 806.7 L1693.2 805.2 L1697.6 803.9 L1702.1 802.5 L1706.5 801.2 L1711.0 800.0 L1715.4 798.7 L1719.8 797.4 L1724.3 796.1 L1728.7 794.8 L1733.2 793.4 L1737.6 791.9 L1742.0 790.1 L1746.5 788.3 L1750.9 786.4 L1755.4 784.4 L1759.8 782.4 L1764.2 780.5 L1768.7 778.5 L1773.1 776.6 L1777.6 774.8 L1782.0 773.0 L1786.4 771.6 L1790.9 770.2 L1795.3 768.8 L1799.8 767.4 L1804.2 766.1 L1808.6 764.8 L1813.1 763.6 L1817.5 762.4 L1822.0 761.3 L1826.4 760.4" fill="none" stroke="#f6cfcf" stroke-width="6" stroke-linejoin="round" stroke-linecap="round" clip-path="url(#c3)" opacity=".7"/>
<path d="M1160.4 972.6 L1164.8 971.7 L1169.3 970.7 L1173.7 969.6 L1178.2 968.5 L1182.6 967.3 L1187.0 966.1 L1191.5 964.8 L1195.9 963.6 L1200.4 962.4 L1204.8 961.2 L1209.2 960.1 L1213.7 958.9 L1218.1 957.7 L1222.6 956.5 L1227.0 955.4 L1231.4 954.2 L1235.9 953.0 L1240.3 951.8 L1244.8 950.5 L1249.2 949.2 L1253.6 947.7 L1258.1 946.2 L1262.5 944.6 L1267.0 943.0 L1271.4 941.4 L1275.8 939.7 L1280.3 938.1 L1284.7 936.5 L1289.2 935.0 L1293.6 933.4 L1298.0 932.1 L1302.5 930.8 L1306.9 929.6 L1311.4 928.3 L1315.8 927.1 L1320.2 925.8 L1324.7 924.6 L1329.1 923.3 L1333.6 922.1 L1338.0 920.8 L1342.4 919.4 L1346.9 918.1 L1351.3 916.7 L1355.8 915.3 L1360.2 913.9 L1364.6 912.5 L1369.1 911.1 L1373.5 909.7 L1378.0 908.3 L1382.4 906.9 L1386.8 905.6 L1391.3 904.3 L1395.7 902.9 L1400.2 901.6 L1404.6 900.3 L1409.0 899.0 L1413.5 897.7 L1417.9 896.4 L1422.4 895.0 L1426.8 893.6 L1431.2 892.2 L1435.7 890.7 L1440.1 889.1 L1444.6 887.6 L1449.0 886.1 L1453.4 884.5 L1457.9 883.0 L1462.3 881.5 L1466.8 880.0 L1471.2 878.5 L1475.6 877.1 L1480.1 875.7 L1484.5 874.4 L1489.0 873.0 L1493.4 871.7 L1497.8 870.3 L1502.3 869.0 L1506.7 867.6 L1511.2 866.3 L1515.6 864.9 L1520.0 863.4 L1524.5 862.0 L1528.9 860.5 L1533.4 859.0 L1537.8 857.5 L1542.2 856.0 L1546.7 854.5 L1551.1 853.0 L1555.6 851.5 L1560.0 850.1 L1564.4 848.7 L1568.9 847.3 L1573.3 845.9 L1577.8 844.5 L1582.2 843.1 L1586.6 841.8 L1591.1 840.4 L1595.5 839.0 L1600.0 837.6 L1604.4 836.2 L1608.8 834.6 L1613.3 833.1 L1617.7 831.5 L1622.2 829.9 L1626.6 828.3 L1631.0 826.7 L1635.5 825.1 L1639.9 823.5 L1644.4 821.9 L1648.8 820.4 L1653.2 818.8 L1657.7 817.3 L1662.1 815.8 L1666.6 814.2 L1671.0 812.7 L1675.4 811.2 L1679.9 809.7 L1684.3 808.2 L1688.8 806.7 L1693.2 805.2 L1697.6 803.9 L1702.1 802.5 L1706.5 801.2 L1711.0 800.0 L1715.4 798.7 L1719.8 797.4 L1724.3 796.1 L1728.7 794.8 L1733.2 793.4 L1737.6 791.9 L1742.0 790.1 L1746.5 788.3 L1750.9 786.4 L1755.4 784.4 L1759.8 782.4 L1764.2 780.5 L1768.7 778.5 L1773.1 776.6 L1777.6 774.8 L1782.0 773.0 L1786.4 771.6 L1790.9 770.2 L1795.3 768.8 L1799.8 767.4 L1804.2 766.1 L1808.6 764.8 L1813.1 763.6 L1817.5 762.4 L1822.0 761.3 L1826.4 760.4" fill="none" stroke="#a11d1d" stroke-width="1.8" stroke-linejoin="round" stroke-linecap="round" clip-path="url(#c3)"/>
<path d="M1160.4 971.8 L1164.8 970.7 L1169.3 969.6 L1173.7 968.3 L1178.2 967.0 L1182.6 965.6 L1187.0 964.1 L1191.5 962.7 L1195.9 961.3 L1200.4 959.9 L1204.8 958.5 L1209.2 957.3 L1213.7 956.0 L1218.1 954.8 L1222.6 953.6 L1227.0 952.3 L1231.4 951.1 L1235.9 949.9 L1240.3 948.6 L1244.8 947.3 L1249.2 945.9 L1253.6 944.3 L1258.1 942.6 L1262.5 940.9 L1267.0 939.2 L1271.4 937.4 L1275.8 935.6 L1280.3 933.9 L1284.7 932.2 L1289.2 930.5 L1293.6 928.9 L1298.0 927.4 L1302.5 926.1 L1306.9 924.7 L1311.4 923.4 L1315.8 922.1 L1320.2 920.8 L1324.7 919.5 L1329.1 918.2 L1333.6 916.9 L1338.0 915.6 L1342.4 914.2 L1346.9 912.8 L1351.3 911.4 L1355.8 910.0 L1360.2 908.6 L1364.6 907.2 L1369.1 905.8 L1373.5 904.5 L1378.0 903.1 L1382.4 901.7 L1386.8 900.4 L1391.3 899.0 L1395.7 897.7 L1400.2 896.4 L1404.6 895.1 L1409.0 893.8 L1413.5 892.5 L1417.9 891.2 L1422.4 889.8 L1426.8 888.4 L1431.2 886.8 L1435.7 885.2 L1440.1 883.6 L1444.6 881.9 L1449.0 880.3 L1453.4 878.6 L1457.9 876.9 L1462.3 875.3 L1466.8 873.6 L1471.2 872.0 L1475.6 870.4 L1480.1 868.9 L1484.5 867.3 L1489.0 865.8 L1493.4 864.2 L1497.8 862.7 L1502.3 861.1 L1506.7 859.6 L1511.2 858.1 L1515.6 856.5 L1520.0 855.0 L1524.5 853.5 L1528.9 852.0 L1533.4 850.5 L1537.8 849.0 L1542.2 847.5 L1546.7 846.1 L1551.1 844.6 L1555.6 843.1 L1560.0 841.7 L1564.4 840.3 L1568.9 839.0 L1573.3 837.7 L1577.8 836.4 L1582.2 835.1 L1586.6 833.8 L1591.1 832.5 L1595.5 831.2 L1600.0 829.8 L1604.4 828.4 L1608.8 826.8 L1613.3 825.1 L1617.7 823.4 L1622.2 821.7 L1626.6 820.0 L1631.0 818.2 L1635.5 816.5 L1639.9 814.8 L1644.4 813.0 L1648.8 811.4 L1653.2 809.7 L1657.7 808.2 L1662.1 806.6 L1666.6 805.0 L1671.0 803.4 L1675.4 801.8 L1679.9 800.3 L1684.3 798.7 L1688.8 797.1 L1693.2 795.6 L1697.6 794.0 L1702.1 792.5 L1706.5 791.1 L1711.0 789.6 L1715.4 788.1 L1719.8 786.6 L1724.3 785.1 L1728.7 783.6 L1733.2 782.0 L1737.6 780.4 L1742.0 778.5 L1746.5 776.6 L1750.9 774.6 L1755.4 772.6 L1759.8 770.5 L1764.2 768.5 L1768.7 766.5 L1773.1 764.5 L1777.6 762.6 L1782.0 760.8 L1786.4 759.4 L1790.9 758.0 L1795.3 756.6 L1799.8 755.2 L1804.2 753.9 L1808.6 752.6 L1813.1 751.4 L1817.5 750.3 L1822.0 749.2 L1826.4 748.2" fill="none" stroke="#c41a1a" stroke-width="2.4" stroke-linejoin="round" stroke-linecap="round" clip-path="url(#c3)"/>
<path d="M1160.4 972.6 L1164.8 970.6 L1169.3 968.3 L1173.7 965.8 L1178.2 963.2 L1182.6 960.5 L1187.0 957.8 L1191.5 955.0 L1195.9 952.4 L1200.4 949.8 L1204.8 947.3 L1209.2 945.4 L1213.7 943.6 L1218.1 941.8 L1222.6 940.0 L1227.0 938.3 L1231.4 936.6 L1235.9 934.9 L1240.3 933.1 L1244.8 931.4 L1249.2 929.7 L1253.6 927.8 L1258.1 926.0 L1262.5 924.1 L1267.0 922.3 L1271.4 920.4 L1275.8 918.6 L1280.3 916.7 L1284.7 914.9 L1289.2 913.1 L1293.6 911.3 L1298.0 909.8 L1302.5 908.2 L1306.9 906.7 L1311.4 905.2 L1315.8 903.7 L1320.2 902.2 L1324.7 900.7 L1329.1 899.2 L1333.6 897.7 L1338.0 896.2 L1342.4 894.6 L1346.9 892.9 L1351.3 891.3 L1355.8 889.6 L1360.2 888.0 L1364.6 886.3 L1369.1 884.7 L1373.5 883.0 L1378.0 881.4 L1382.4 879.7 L1386.8 878.1 L1391.3 876.4 L1395.7 874.8 L1400.2 873.1 L1404.6 871.4 L1409.0 869.8 L1413.5 868.1 L1417.9 866.5 L1422.4 864.9 L1426.8 863.3 L1431.2 861.9 L1435.7 860.6 L1440.1 859.3 L1444.6 857.9 L1449.0 856.7 L1453.4 855.4 L1457.9 854.1 L1462.3 852.7 L1466.8 851.4 L1471.2 850.1 L1475.6 848.6 L1480.1 847.0 L1484.5 845.5 L1489.0 843.9 L1493.4 842.4 L1497.8 840.8 L1502.3 839.3 L1506.7 837.8 L1511.2 836.3 L1515.6 834.9 L1520.0 833.8 L1524.5 832.9 L1528.9 831.9 L1533.4 831.1 L1537.8 830.2 L1542.2 829.3 L1546.7 828.4 L1551.1 827.5 L1555.6 826.5 L1560.0 825.4 L1564.4 824.0 L1568.9 822.4 L1573.3 820.9 L1577.8 819.2 L1582.2 817.6 L1586.6 816.0 L1591.1 814.3 L1595.5 812.7 L1600.0 811.1 L1604.4 809.6 L1608.8 808.4 L1613.3 807.1 L1617.7 805.9 L1622.2 804.7 L1626.6 803.5 L1631.0 802.4 L1635.5 801.2 L1639.9 800.0 L1644.4 798.8 L1648.8 797.6 L1653.2 796.4 L1657.7 795.1 L1662.1 793.8 L1666.6 792.5 L1671.0 791.3 L1675.4 790.0 L1679.9 788.7 L1684.3 787.5 L1688.8 786.2 L1693.2 785.0 L1697.6 783.9 L1702.1 782.8 L1706.5 781.8 L1711.0 780.7 L1715.4 779.7 L1719.8 778.6 L1724.3 777.6 L1728.7 776.5 L1733.2 775.4 L1737.6 774.3 L1742.0 772.9 L1746.5 771.6 L1750.9 770.2 L1755.4 768.7 L1759.8 767.3 L1764.2 765.9 L1768.7 764.5 L1773.1 763.1 L1777.6 761.7 L1782.0 760.4 L1786.4 759.1 L1790.9 757.9 L1795.3 756.7 L1799.8 755.4 L1804.2 754.2 L1808.6 753.1 L1813.1 751.9 L1817.5 750.9 L1822.0 749.9 L1826.4 749.0" fill="none" stroke="#c41a1a" stroke-width="3" stroke-linejoin="round" stroke-linecap="round" clip-path="url(#c3)"/>
<path d="M1160.4 972.6 L1164.8 971.5 L1169.3 970.4 L1173.7 969.1 L1178.2 967.8 L1182.6 966.4 L1187.0 964.9 L1191.5 963.5 L1195.9 962.1 L1200.4 960.7 L1204.8 959.3 L1209.2 958.1 L1213.7 956.8 L1218.1 955.6 L1222.6 954.4 L1227.0 953.1 L1231.4 951.9 L1235.9 950.7 L1240.3 949.4 L1244.8 948.1 L1249.2 946.7 L1253.6 945.1 L1258.1 943.4 L1262.5 941.7 L1267.0 940.0 L1271.4 938.2 L1275.8 936.4 L1280.3 934.7 L1284.7 933.0 L1289.2 931.3 L1293.6 929.7 L1298.0 928.2 L1302.5 926.9 L1306.9 925.5 L1311.4 924.2 L1315.8 922.9 L1320.2 921.6 L1324.7 920.3 L1329.1 919.0 L1333.6 917.7 L1338.0 916.4 L1342.4 915.0 L1346.9 913.6 L1351.3 912.2 L1355.8 910.8 L1360.2 909.4 L1364.6 908.0 L1369.1 906.6 L1373.5 905.3 L1378.0 903.9 L1382.4 902.5 L1386.8 901.2 L1391.3 899.8 L1395.7 898.5 L1400.2 897.2 L1404.6 895.9 L1409.0 894.6 L1413.5 893.3 L1417.9 892.0 L1422.4 890.6 L1426.8 889.2 L1431.2 887.6 L1435.7 886.0 L1440.1 884.4 L1444.6 882.7 L1449.0 881.1 L1453.4 879.4 L1457.9 877.7 L1462.3 876.1 L1466.8 874.4 L1471.2 872.8 L1475.6 871.2 L1480.1 869.7 L1484.5 868.1 L1489.0 866.6 L1493.4 865.0 L1497.8 863.5 L1502.3 861.9 L1506.7 860.4 L1511.2 858.9 L1515.6 857.3 L1520.0 855.8 L1524.5 854.3 L1528.9 852.8 L1533.4 851.3 L1537.8 849.8 L1542.2 848.3 L1546.7 846.9 L1551.1 845.4 L1555.6 843.9 L1560.0 842.5 L1564.4 841.1 L1568.9 839.8 L1573.3 838.5 L1577.8 837.2 L1582.2 835.9 L1586.6 834.6 L1591.1 833.3 L1595.5 832.0 L1600.0 830.6 L1604.4 829.2 L1608.8 827.6 L1613.3 825.9 L1617.7 824.2 L1622.2 822.5 L1626.6 820.8 L1631.0 819.0 L1635.5 817.3 L1639.9 815.6 L1644.4 813.8 L1648.8 812.2 L1653.2 810.5 L1657.7 809.0 L1662.1 807.4 L1666.6 805.8 L1671.0 804.2 L1675.4 802.6 L1679.9 801.1 L1684.3 799.5 L1688.8 797.9 L1693.2 796.4 L1697.6 794.8 L1702.1 793.3 L1706.5 791.9 L1711.0 790.4 L1715.4 788.9 L1719.8 787.4 L1724.3 785.9 L1728.7 784.4 L1733.2 782.8 L1737.6 781.2 L1742.0 779.3 L1746.5 777.4 L1750.9 775.4 L1755.4 773.4 L1759.8 771.3 L1764.2 769.3 L1768.7 767.3 L1773.1 765.3 L1777.6 763.4 L1782.0 761.6 L1786.4 760.2 L1790.9 758.8 L1795.3 757.4 L1799.8 756.0 L1804.2 754.7 L1808.6 753.4 L1813.1 752.2 L1817.5 751.1 L1822.0 750.0 L1826.4 749.0" fill="none" stroke="#c41a1a" stroke-width="3.2" stroke-linejoin="round" stroke-linecap="round" clip-path="url(#c3)"/>
<rect x="1144" y="736" width="728" height="1" fill="#000"/>
<rect x="1871" y="736" width="1" height="248" fill="#000"/>
<rect x="1144" y="736" width="2" height="249" fill="#000"/>
<rect x="1144" y="983" width="728" height="2" fill="#000"/>
<text transform="translate(1158.2 1000.0) scale(0.8 1)" font-family="Liberation Sans, sans-serif" font-size="13" text-anchor="middle" fill="#111">-1.5</text>
<text transform="translate(1202.6 1000.0) scale(0.8 1)" font-family="Liberation Sans, sans-serif" font-size="13" text-anchor="middle" fill="#111">-1.4</text>
<text transform="translate(1247.0 1000.0) scale(0.8 1)" font-family="Liberation Sans, sans-serif" font-size="13" text-anchor="middle" fill="#111">-1.3</text>
<text transform="translate(1291.4 1000.0) scale(0.8 1)" font-family="Liberation Sans, sans-serif" font-size="13" text-anchor="middle" fill="#111">-1.2</text>
<text transform="translate(1335.8 1000.0) scale(0.8 1)" font-family="Liberation Sans, sans-serif" font-size="13" text-anchor="middle" fill="#111">-1.1</text>
<text transform="translate(1380.2 1000.0) scale(0.8 1)" font-family="Liberation Sans, sans-serif" font-size="13" text-anchor="middle" fill="#111">-1.0</text>
<text transform="translate(1424.6 1000.0) scale(0.8 1)" font-family="Liberation Sans, sans-serif" font-size="13" text-anchor="middle" fill="#111">-0.9</text>
<text transform="translate(1469.0 1000.0) scale(0.8 1)" font-family="Liberation Sans, sans-serif" font-size="13" text-anchor="middle" fill="#111">-0.8</text>
<text transform="translate(1513.4 1000.0) scale(0.8 1)" font-family="Liberation Sans, sans-serif" font-size="13" text-anchor="middle" fill="#111">-0.7</text>
<text transform="translate(1557.8 1000.0) scale(0.8 1)" font-family="Liberation Sans, sans-serif" font-size="13" text-anchor="middle" fill="#111">-0.6</text>
<text transform="translate(1602.2 1000.0) scale(0.8 1)" font-family="Liberation Sans, sans-serif" font-size="13" text-anchor="middle" fill="#111">-0.5</text>
<text transform="translate(1646.6 1000.0) scale(0.8 1)" font-family="Liberation Sans, sans-serif" font-size="13" text-anchor="middle" fill="#111">-0.4</text>
<text transform="translate(1691.0 1000.0) scale(0.8 1)" font-family="Liberation Sans, sans-serif" font-size="13" text-anchor="middle" fill="#111">-0.3</text>
<text transform="translate(1735.4 1000.0) scale(0.8 1)" font-family="Liberation Sans, sans-serif" font-size="13" text-anchor="middle" fill="#111">-0.2</text>
<text transform="translate(1779.8 1000.0) scale(0.8 1)" font-family="Liberation Sans, sans-serif" font-size="13" text-anchor="middle" fill="#111">-0.1</text>
<text transform="translate(1824.2 1000.0) scale(0.8 1)" font-family="Liberation Sans, sans-serif" font-size="13" text-anchor="middle" fill="#111">0.0</text>
<text transform="translate(1868.6 1000.0) scale(0.8 1)" font-family="Liberation Sans, sans-serif" font-size="13" text-anchor="middle" fill="#111">0.1</text>
<text transform="translate(1133.0 747.9) scale(0.8 1)" font-family="Liberation Sans, sans-serif" font-size="13" text-anchor="start" fill="#111">0</text>
<text transform="translate(1133.0 779.5) scale(0.8 1)" font-family="Liberation Sans, sans-serif" font-size="13" text-anchor="start" fill="#111">-5</text>
<text transform="translate(1133.0 811.1) scale(0.8 1)" font-family="Liberation Sans, sans-serif" font-size="13" text-anchor="start" fill="#111">-10</text>
<text transform="translate(1133.0 842.7) scale(0.8 1)" font-family="Liberation Sans, sans-serif" font-size="13" text-anchor="start" fill="#111">-15</text>
<text transform="translate(1133.0 874.2) scale(0.8 1)" font-family="Liberation Sans, sans-serif" font-size="13" text-anchor="start" fill="#111">-20</text>
<text transform="translate(1133.0 905.8) scale(0.8 1)" font-family="Liberation Sans, sans-serif" font-size="13" text-anchor="start" fill="#111">-25</text>
<text transform="translate(1133.0 937.4) scale(0.8 1)" font-family="Liberation Sans, sans-serif" font-size="13" text-anchor="start" fill="#111">-30</text>
<text transform="translate(1133.0 969.0) scale(0.8 1)" font-family="Liberation Sans, sans-serif" font-size="13" text-anchor="start" fill="#111">-35</text>
<text x="1503" y="1020.5" font-family="Liberation Sans, sans-serif" font-size="13" text-anchor="middle" fill="#111" textLength="112" lengthAdjust="spacingAndGlyphs">Displacement (mm)</text>
<text transform="translate(1123 865) rotate(-90)" font-family="Liberation Sans, sans-serif" font-size="13" text-anchor="middle" fill="#111" textLength="54" lengthAdjust="spacingAndGlyphs">Force (N)</text>
</svg>


<!-- ===== status bar ===== -->
<div class="a" style="left:0;top:1019px;width:1920px;height:21px;background:#f0f0f0;"></div>
<div class="a" style="left:0;top:1019px;width:1920px;height:2px;background:#fcfcfc;"></div>
<div class="a" style="left:260px;top:391px;width:2px;height:629px;background:#fcfcfc;"></div>
<div class="a" style="left:3px;top:1023px;font-size:12px;line-height:15px;transform-origin:0 0;transform:scaleX(.9);">Ready</div>
<div class="a" style="left:1820px;top:1023px;width:28px;height:17px;box-sizing:border-box;border-left:1px solid #a0a0a0;border-top:1px solid #c8c8c8;"></div>
<div class="a" style="left:1851px;top:1023px;width:33px;height:17px;box-sizing:border-box;border-left:1px solid #a0a0a0;border-top:1px solid #c8c8c8;"></div>
<div class="a" style="left:1887px;top:1023px;width:31px;height:17px;box-sizing:border-box;border-left:1px solid #a0a0a0;border-top:1px solid #c8c8c8;"></div>
<div class="a" style="left:1853px;top:1025px;font-size:12px;line-height:15px;">NUM</div>

</body>
</html>
